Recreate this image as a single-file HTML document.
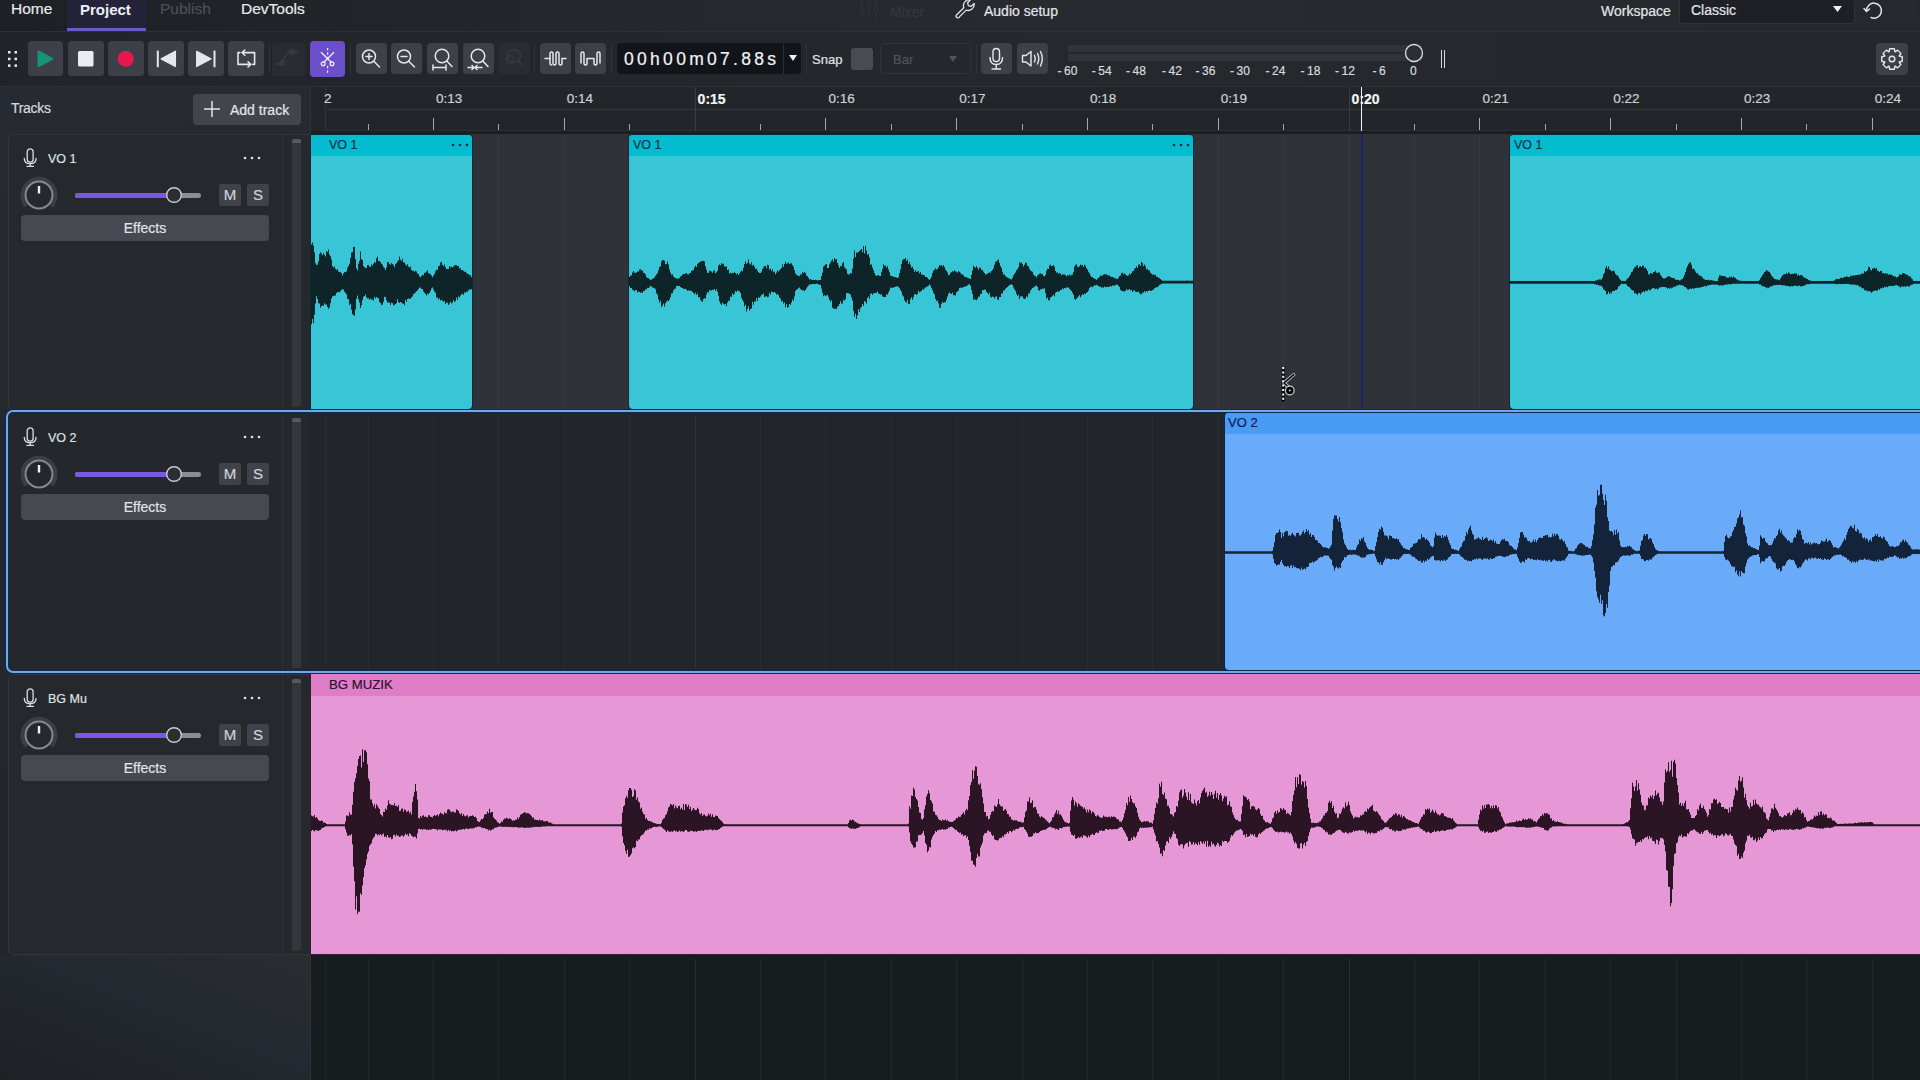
<!DOCTYPE html>
<html><head><meta charset="utf-8">
<style>
*{margin:0;padding:0;box-sizing:border-box}
html,body{width:1920px;height:1080px;overflow:hidden;background:#1f2227;font-family:"Liberation Sans",sans-serif;color:#e6e8eb}
.a{position:absolute}
.t{position:absolute;white-space:nowrap;line-height:1;-webkit-text-stroke:0.2px currentColor}
#top{left:0;top:0;width:1920px;height:31px;background:linear-gradient(90deg,#1d2024 0%,#23262b 25%,#272a2f 55%,#25282d 100%)}
#tb{left:0;top:32px;width:1920px;height:54px;background:linear-gradient(90deg,#212428 0%,#25292d 60%,#24282c 100%)}
.btn{position:absolute;background:#3d4147;border-radius:4px}
.btn svg{position:absolute;left:0;top:0}
.sep{position:absolute;width:1px;background:#30343a}
#ruler{left:311px;top:87px;width:1609px;height:44px;background:#22252a}
#lp{left:0;top:87px;width:310px;height:993px;background:linear-gradient(160deg,#272a30 0%,#24272c 50%,#212428 100%)}
.panel{position:absolute;left:9px;width:293px;border:1px solid #33373d;border-radius:6px;background:#25282d}
.clip{position:absolute;overflow:hidden;border-radius:4px}
</style></head><body>

<!-- TOP BAR -->
<div id="top" class="a">
  <div class="a" style="left:67px;top:0;width:79px;height:31px;background:#242339"></div>
  <div class="a" style="left:67px;top:28px;width:79px;height:3px;background:#6b5bc9"></div>
  <div class="t" style="left:11px;top:0.5px;font-size:15.5px;color:#e8eaed">Home</div>
  <div class="t" style="left:80px;top:1.5px;font-size:15px;font-weight:bold;color:#eef0f3;-webkit-text-stroke:0">Project</div>
  <div class="t" style="left:160px;top:0.5px;font-size:15.5px;color:#4d5157">Publish</div>
  <div class="t" style="left:241px;top:0.5px;font-size:15.5px;color:#e8eaed">DevTools</div>
  <div class="t" style="left:890px;top:5px;font-size:14px;color:#34383e">Mixer</div>
  <div class="t" style="left:984px;top:4px;font-size:14px;color:#e4e6e9">Audio setup</div>
  <div class="t" style="left:1601px;top:4px;font-size:14px;color:#e4e6e9">Workspace</div>
  <div class="a" style="left:1679px;top:-2px;width:176px;height:26px;border:1px solid #30343a;border-radius:3px;background:#1d2024"></div>
  <div class="t" style="left:1691px;top:3px;font-size:14px;color:#e4e6e9">Classic</div>
<svg class="a" style="left:858px;top:0px" width="24" height="20" fill="none" stroke="#2e3237" stroke-width="1.4"><path d="M4 0 V19 M11 0 V19 M18 0 V19"/><circle cx="4" cy="11" r="2" fill="#22262b"/><circle cx="11" cy="5" r="2" fill="#22262b"/><circle cx="18" cy="10" r="2" fill="#22262b"/></svg>
<svg class="a" style="left:953px;top:-2px" width="24" height="22" fill="none" stroke="#e2e5e8" stroke-width="1.3" stroke-linejoin="round"><path d="M3.5 17 L10.8 9.7 A6 6 0 0 1 17.5 1.8 L14.6 4.7 L15.3 7.6 L18.2 8.3 L21.1 5.4 A6 6 0 0 1 13.2 12.1 L5.9 19.4 A1.7 1.7 0 0 1 3.5 17 Z"/></svg>
<svg class="a" style="left:1862px;top:0px" width="24" height="22" fill="none" stroke="#e2e5e8" stroke-width="1.5" stroke-linecap="round" stroke-linejoin="round"><path d="M4.5 11 A7.5 7.5 0 1 1 9 17.5"/><path d="M2 8.5 L4.5 11.5 L7.5 9"/></svg>
<svg class="a" style="left:1832px;top:5px" width="11" height="8"><path d="M1 1 H10 L5.5 7 Z" fill="#eef0f3"/></svg>
<svg class="a" style="left:1900px;top:0px" width="20" height="20" fill="none" stroke="#2a2e33" stroke-width="1.3"><path d="M2 2 V15 M13 2 V15"/></svg>

</div>
<div class="a" style="left:0;top:31px;width:1920px;height:1px;background:#2d3136"></div>

<!-- TOOLBAR -->
<div id="tb" class="a"></div>
<div class="a" style="left:0;top:86px;width:1920px;height:1px;background:#2d3136"></div>
<!-- drag handle -->
<div class="a" style="left:8px;top:51px;width:10px;height:17px">
<svg width="10" height="17"><g fill="#e8eaed"><rect x="0" y="0" width="2.5" height="2.5"/><rect x="6.5" y="0" width="2.5" height="2.5"/><rect x="0" y="6.7" width="2.5" height="2.5"/><rect x="6.5" y="6.7" width="2.5" height="2.5"/><rect x="0" y="13.4" width="2.5" height="2.5"/><rect x="6.5" y="13.4" width="2.5" height="2.5"/></g></svg></div>
<!-- play -->
<div class="btn" style="left:28px;top:41px;width:35px;height:35px"><svg width="35" height="35"><path d="M10.5 10.5 L24.3 17.8 L10.5 25.2 Z" fill="#17937a" stroke="#17937a" stroke-width="2" stroke-linejoin="round"/></svg></div>
<div class="btn" style="left:68px;top:41px;width:36px;height:35px"><svg width="36" height="35"><rect x="10" y="10" width="15.5" height="15.5" rx="1.5" fill="#e9eef4"/></svg></div>
<div class="btn" style="left:108px;top:41px;width:36px;height:35px"><svg width="36" height="35"><circle cx="17.8" cy="17.8" r="8" fill="#e8184e"/></svg></div>
<div class="btn" style="left:148px;top:41px;width:36px;height:35px"><svg width="36" height="35"><rect x="8.8" y="9.6" width="2" height="16.6" fill="#e4e8ee"/><path d="M13.2 17.9 L27.4 10.3 L27.4 25.5 Z" fill="#e4e8ee" stroke="#e4e8ee" stroke-width="1.3" stroke-linejoin="round"/></svg></div>
<div class="btn" style="left:188px;top:41px;width:36px;height:35px"><svg width="36" height="35"><rect x="25.5" y="9.6" width="2" height="16.6" fill="#e4e8ee"/><path d="M8.7 10.3 L22.9 17.9 L8.7 25.5 Z" fill="#e4e8ee" stroke="#e4e8ee" stroke-width="1.3" stroke-linejoin="round"/></svg></div>
<div class="btn" style="left:228px;top:41px;width:36px;height:35px"><svg width="36" height="35" fill="none" stroke="#e4e8ee" stroke-width="1.6" stroke-linecap="round" stroke-linejoin="round"><path d="M11.8 11.6 H10 V23.4 H22.5"/><path d="M20 20.8 L22.6 23.4 L20 26"/><path d="M24.6 23.4 H26.6 V11.6 H14.2"/><path d="M16.8 9 L14.2 11.6 L16.8 14.2"/></svg></div>
<div class="sep" style="left:269px;top:44px;height:30px"></div>
<div class="btn" style="left:272px;top:43px;width:33px;height:33px;background:#292d32"><svg width="33" height="33" fill="none" stroke="#3a3e44" stroke-width="1.3"><path d="M4 21 H9 L15 11 L20 9 H26"/><circle cx="10" cy="20" r="2"/><circle cx="20" cy="9" r="2"/></svg></div>
<div class="btn" style="left:310px;top:41px;width:35px;height:36px;background:#6a4fc9"><svg width="35" height="36" fill="none" stroke="#efe9ff" stroke-width="1.3" stroke-linecap="round"><path d="M17.6 7.5 V8.8 M17.6 12 V13.3 M17.6 16.5 V17.8 M17.6 25.5 V26.8 M17.6 30 V31.3"/><path d="M11.3 11.5 L21.3 21.2 M23.7 11.5 L13.8 21.2"/><circle cx="13.2" cy="22.8" r="1.9"/><circle cx="22" cy="22.8" r="1.9"/></svg></div>
<div class="sep" style="left:350px;top:44px;height:30px"></div>
<!-- zoom buttons -->
<div class="btn" style="left:356px;top:43px;width:31px;height:31px"><svg width="31" height="31" fill="none" stroke="#e4e8ee" stroke-width="1.5" stroke-linecap="round"><circle cx="13" cy="13.5" r="6.5"/><path d="M17.8 18.3 L23.5 24"/><path d="M13 10.5 V16.5 M10 13.5 H16"/></svg></div>
<div class="btn" style="left:391px;top:43px;width:31px;height:31px"><svg width="31" height="31" fill="none" stroke="#e4e8ee" stroke-width="1.5" stroke-linecap="round"><circle cx="13" cy="13.5" r="6.5"/><path d="M17.8 18.3 L23.5 24"/><path d="M10 13.5 H16"/></svg></div>
<div class="btn" style="left:427px;top:43px;width:31px;height:31px"><svg width="31" height="31" fill="none" stroke="#e4e8ee" stroke-width="1.5" stroke-linecap="round"><circle cx="15" cy="13" r="6.8"/><path d="M19.8 18 L25 23.5"/><path d="M6 24.5 H19 M6 22 V27 M19 22 V27"/></svg></div>
<div class="btn" style="left:463px;top:43px;width:31px;height:31px"><svg width="31" height="31" fill="none" stroke="#e4e8ee" stroke-width="1.5" stroke-linecap="round"><circle cx="15" cy="13" r="6.8"/><path d="M19.8 18 L25 23.5"/><path d="M5 24.5 H19 M9 22.5 L11 24.5 L9 26.5 M14 22.5 L12 24.5 L14 26.5"/></svg></div>
<div class="btn" style="left:499px;top:43px;width:31px;height:31px;background:#292d32"><svg width="31" height="31" fill="none" stroke="#353940" stroke-width="1.5"><circle cx="15" cy="13" r="6.5"/><path d="M19.5 18 L24 23"/><circle cx="11" cy="17" r="4"/></svg></div>
<div class="sep" style="left:534px;top:44px;height:30px"></div>
<div class="btn" style="left:540px;top:43px;width:31px;height:31px"><svg width="31" height="31" fill="none" stroke="#e4e8ee" stroke-width="1.5" stroke-linecap="round" stroke-linejoin="round"><path d="M5 15.5 H10 V11 Q10 9 11.5 9 Q13 9 13 11 V20 Q13 22 14.5 22 Q16 22 16 20 V11 Q16 9 17.5 9 Q19 9 19 11 V20 Q19 22 20.5 22 Q22 22 22 20 V15.5 H26"/><path d="M10 15.5 V20 Q10 22 11.5 22"/></svg></div>
<div class="btn" style="left:575px;top:43px;width:31px;height:31px"><svg width="31" height="31" fill="none" stroke="#e4e8ee" stroke-width="1.5" stroke-linecap="round" stroke-linejoin="round"><path d="M6 20 V11 Q6 9 7.5 9 Q9 9 9 11 V20 Q9 22 10.5 22 Q12 22 12 20 V15.5 H19 V20 Q19 22 20.5 22 Q22 22 22 20 V11 Q22 9 23.5 9 Q25 9 25 11 V20"/></svg></div>
<div class="sep" style="left:611px;top:44px;height:30px"></div>
<!-- time display -->
<div class="a" style="left:617px;top:43px;width:184px;height:31px;background:#111418;border-radius:4px"></div>
<div class="a" style="left:783px;top:43px;width:1px;height:31px;background:#2a2e33"></div>
<div class="t" style="left:624px;top:51px;font-size:17.5px;letter-spacing:3.3px;color:#f2f4f6">00h00m07.88s</div>
<svg class="a" style="left:788px;top:54px" width="10" height="8"><path d="M1 1 H9 L5 7 Z" fill="#eef0f3"/></svg>
<div class="sep" style="left:806px;top:44px;height:30px"></div>
<div class="t" style="left:812px;top:53px;font-size:13px;color:#e0e2e5">Snap</div>
<div class="a" style="left:851px;top:48px;width:22px;height:22px;background:#474b52;border-radius:3px"></div>
<div class="a" style="left:880px;top:43px;width:91px;height:31px;border:1px solid #30343a;border-radius:4px"></div>
<div class="t" style="left:893px;top:53px;font-size:13px;color:#50555b">Bar</div>
<svg class="a" style="left:948px;top:55px" width="10" height="8"><path d="M1 1 H9 L5 7 Z" fill="#50555b"/></svg>
<div class="sep" style="left:976px;top:44px;height:30px"></div>
<div class="btn" style="left:981px;top:43px;width:31px;height:31px"><svg width="31" height="31" fill="none" stroke="#e4e8ee" stroke-width="1.4" stroke-linecap="round"><rect x="12" y="5.5" width="6.5" height="13" rx="3.25"/><path d="M9 14.5 Q9 21.5 15.25 21.5 Q21.5 21.5 21.5 14.5"/><path d="M15.25 21.5 V26 M11 26 H19.5"/></svg></div>
<div class="btn" style="left:1017px;top:43px;width:31px;height:31px"><svg width="31" height="31" fill="none" stroke="#e4e8ee" stroke-width="1.4" stroke-linecap="round" stroke-linejoin="round"><path d="M5.5 12.5 H9 L14 8.5 V23 L9 19 H5.5 Z"/><path d="M17.5 12.5 Q19 15.5 17.5 19"/><path d="M20.5 10.5 Q23 15.5 20.5 21"/><path d="M23.5 8.5 Q27 15.5 23.5 23"/></svg></div>
<!-- meter -->
<div class="a" style="left:1068px;top:45px;width:354px;height:7px;background:#30343a;border-radius:1px"></div>
<div class="a" style="left:1068px;top:54px;width:354px;height:7px;background:#30343a;border-radius:1px"></div>
<svg class="a" style="left:1402px;top:42px" width="24" height="24"><circle cx="12" cy="11" r="8.5" fill="#2a2e33" stroke="#dcdfe3" stroke-width="1.3"/></svg>
<div class="a" style="left:1441px;top:50px;width:1px;height:18px;background:#d6d9dd"></div>
<div class="a" style="left:1444px;top:50px;width:1px;height:18px;background:#d6d9dd"></div>
<div class="t" style="left:1057.5px;top:64.5px;font-size:12px;color:#d8dbdf"><span style="margin-right:2.5px">-</span>60</div><div class="t" style="left:1091.8px;top:64.5px;font-size:12px;color:#d8dbdf"><span style="margin-right:2.5px">-</span>54</div><div class="t" style="left:1126.0px;top:64.5px;font-size:12px;color:#d8dbdf"><span style="margin-right:2.5px">-</span>48</div><div class="t" style="left:1162.0px;top:64.5px;font-size:12px;color:#d8dbdf"><span style="margin-right:2.5px">-</span>42</div><div class="t" style="left:1195.5px;top:64.5px;font-size:12px;color:#d8dbdf"><span style="margin-right:2.5px">-</span>36</div><div class="t" style="left:1230.0px;top:64.5px;font-size:12px;color:#d8dbdf"><span style="margin-right:2.5px">-</span>30</div><div class="t" style="left:1265.5px;top:64.5px;font-size:12px;color:#d8dbdf"><span style="margin-right:2.5px">-</span>24</div><div class="t" style="left:1300.5px;top:64.5px;font-size:12px;color:#d8dbdf"><span style="margin-right:2.5px">-</span>18</div><div class="t" style="left:1335.0px;top:64.5px;font-size:12px;color:#d8dbdf"><span style="margin-right:2.5px">-</span>12</div><div class="t" style="left:1372.5px;top:64.5px;font-size:12px;color:#d8dbdf"><span style="margin-right:2.5px">-</span>6</div><div class="t" style="left:1410.0px;top:64.5px;font-size:12px;color:#d8dbdf">0</div>
<!-- gear -->
<div class="btn" style="left:1876px;top:43px;width:32px;height:32px"><svg width="32" height="32" fill="none" stroke="#e4e8ee" stroke-width="1.4" stroke-linejoin="round"><path d="M23.21 13.03 L26.25 13.71 L26.25 18.29 L23.21 18.97 L23.20 19.00 L24.87 21.63 L21.63 24.87 L19.00 23.20 L18.97 23.21 L18.29 26.25 L13.71 26.25 L13.03 23.21 L13.00 23.20 L10.37 24.87 L7.13 21.63 L8.80 19.00 L8.79 18.97 L5.75 18.29 L5.75 13.71 L8.79 13.03 L8.80 13.00 L7.13 10.37 L10.37 7.13 L13.00 8.80 L13.03 8.79 L13.71 5.75 L18.29 5.75 L18.97 8.79 L19.00 8.80 L21.63 7.13 L24.87 10.37 L23.20 13.00 Z"/><circle cx="16" cy="16" r="2.8"/></svg></div>


<!-- LEFT PANEL -->
<div id="lp" class="a"></div><div class="a" style="left:0;top:955px;width:310px;height:125px;background:linear-gradient(to bottom left,#2a2d30 0%,#232930 45%,#1e2124 100%)"></div>
<div class="t" style="left:11px;top:101px;font-size:14px;letter-spacing:-0.3px;color:#d8dadd">Tracks</div>
<div class="btn" style="left:193px;top:94px;width:108px;height:31px;background:#42464c"></div><div class="a" style="left:310px;top:87px;width:1px;height:993px;background:#2f3338"></div>
<div class="t" style="left:230px;top:103px;font-size:14px;color:#e4e6e9">Add track</div><svg class="a" style="left:203px;top:100px" width="18" height="18" fill="none" stroke="#e2e5e8" stroke-width="1.5"><path d="M9 1 V17 M1 9 H17"/></svg>

<div class="a" style="left:8px;top:134px;width:304px;height:277px;border:1px solid #32363c;border-right:none;border-radius:6px 0 0 6px;background:#25292e"></div>
<div class="a" style="left:8px;top:674px;width:304px;height:281px;border:1px solid #32363c;border-right:none;border-radius:6px 0 0 6px;background:#25292e"></div>
<div class="a" style="left:8px;top:413px;width:304px;height:259px;background:#24272c"></div>
<svg class="a" style="left:22px;top:148px" width="16" height="20" fill="none" stroke="#d9dce0" stroke-width="1.3" stroke-linecap="round"><rect x="5.2" y="0.9" width="5.9" height="13.3" rx="2.95"/><path d="M2.3 10.5 Q2.3 15.7 8.15 15.7 Q14 15.7 14 10.5"/><path d="M8.15 15.7 V18.3 M4.9 18.3 H11.5"/></svg>
<div class="t" style="left:48px;top:153px;font-size:12.5px;color:#dfe2e5">VO 1</div>
<svg class="a" style="left:242px;top:155px" width="20" height="6"><g fill="#e0e3e6"><circle cx="3" cy="3" r="1.3"/><circle cx="10" cy="3" r="1.3"/><circle cx="17" cy="3" r="1.3"/></g></svg>
<svg class="a" style="left:19px;top:175px" width="40" height="40" fill="none"><path d="M7.6 31.2 A16.5 16.5 0 1 1 32.4 31.2" stroke="#3b3f45" stroke-width="4"/><circle cx="20" cy="20" r="13.5" stroke="#868a90" stroke-width="2"/><path d="M20 11 V18.5" stroke="#f2f3f5" stroke-width="2.4"/></svg>
<div class="a" style="left:75px;top:193px;width:126px;height:4.5px;border-radius:2.5px;background:#8a8d92"></div>
<div class="a" style="left:75px;top:193px;width:100px;height:4.5px;border-radius:2.5px;background:#7b58e0"></div>
<svg class="a" style="left:164px;top:185px" width="20" height="20"><circle cx="10" cy="10" r="7.3" fill="#2b2e33" stroke="#c9ccd0" stroke-width="1.4"/></svg>
<div class="a" style="left:219px;top:184px;width:22px;height:22px;background:#3f4349;border-radius:2px"></div>
<div class="a" style="left:247px;top:184px;width:22px;height:22px;background:#3f4349;border-radius:2px"></div>
<div class="t" style="left:219px;top:187px;width:22px;text-align:center;font-size:15px;color:#d0d3d7">M</div>
<div class="t" style="left:247px;top:187px;width:22px;text-align:center;font-size:15px;color:#d0d3d7">S</div>
<div class="a" style="left:21px;top:215px;width:248px;height:26px;background:#464a50;border-radius:4px"></div>
<div class="t" style="left:21px;top:221px;width:248px;text-align:center;font-size:14px;color:#e2e4e7">Effects</div>
<div class="a" style="left:282px;top:135px;width:1px;height:274px;background:#2e3237"></div>
<div class="a" style="left:292px;top:139px;width:9px;height:268px;background:#33373c;border-radius:2px"></div>
<div class="a" style="left:292px;top:139px;width:9px;height:4px;background:#55595f;border-radius:2px 2px 0 0"></div>
<svg class="a" style="left:22px;top:427px" width="16" height="20" fill="none" stroke="#d9dce0" stroke-width="1.3" stroke-linecap="round"><rect x="5.2" y="0.9" width="5.9" height="13.3" rx="2.95"/><path d="M2.3 10.5 Q2.3 15.7 8.15 15.7 Q14 15.7 14 10.5"/><path d="M8.15 15.7 V18.3 M4.9 18.3 H11.5"/></svg>
<div class="t" style="left:48px;top:432px;font-size:12.5px;color:#dfe2e5">VO 2</div>
<svg class="a" style="left:242px;top:434px" width="20" height="6"><g fill="#e0e3e6"><circle cx="3" cy="3" r="1.3"/><circle cx="10" cy="3" r="1.3"/><circle cx="17" cy="3" r="1.3"/></g></svg>
<svg class="a" style="left:19px;top:454px" width="40" height="40" fill="none"><path d="M7.6 31.2 A16.5 16.5 0 1 1 32.4 31.2" stroke="#3b3f45" stroke-width="4"/><circle cx="20" cy="20" r="13.5" stroke="#868a90" stroke-width="2"/><path d="M20 11 V18.5" stroke="#f2f3f5" stroke-width="2.4"/></svg>
<div class="a" style="left:75px;top:472px;width:126px;height:4.5px;border-radius:2.5px;background:#8a8d92"></div>
<div class="a" style="left:75px;top:472px;width:100px;height:4.5px;border-radius:2.5px;background:#7b58e0"></div>
<svg class="a" style="left:164px;top:464px" width="20" height="20"><circle cx="10" cy="10" r="7.3" fill="#2b2e33" stroke="#c9ccd0" stroke-width="1.4"/></svg>
<div class="a" style="left:219px;top:463px;width:22px;height:22px;background:#3f4349;border-radius:2px"></div>
<div class="a" style="left:247px;top:463px;width:22px;height:22px;background:#3f4349;border-radius:2px"></div>
<div class="t" style="left:219px;top:466px;width:22px;text-align:center;font-size:15px;color:#d0d3d7">M</div>
<div class="t" style="left:247px;top:466px;width:22px;text-align:center;font-size:15px;color:#d0d3d7">S</div>
<div class="a" style="left:21px;top:494px;width:248px;height:26px;background:#464a50;border-radius:4px"></div>
<div class="t" style="left:21px;top:500px;width:248px;text-align:center;font-size:14px;color:#e2e4e7">Effects</div>
<div class="a" style="left:282px;top:414px;width:1px;height:256px;background:#2e3237"></div>
<div class="a" style="left:292px;top:418px;width:9px;height:250px;background:#33373c;border-radius:2px"></div>
<div class="a" style="left:292px;top:418px;width:9px;height:4px;background:#55595f;border-radius:2px 2px 0 0"></div>
<svg class="a" style="left:22px;top:688px" width="16" height="20" fill="none" stroke="#d9dce0" stroke-width="1.3" stroke-linecap="round"><rect x="5.2" y="0.9" width="5.9" height="13.3" rx="2.95"/><path d="M2.3 10.5 Q2.3 15.7 8.15 15.7 Q14 15.7 14 10.5"/><path d="M8.15 15.7 V18.3 M4.9 18.3 H11.5"/></svg>
<div class="t" style="left:48px;top:693px;font-size:12.5px;color:#dfe2e5">BG Mu</div>
<svg class="a" style="left:242px;top:695px" width="20" height="6"><g fill="#e0e3e6"><circle cx="3" cy="3" r="1.3"/><circle cx="10" cy="3" r="1.3"/><circle cx="17" cy="3" r="1.3"/></g></svg>
<svg class="a" style="left:19px;top:715px" width="40" height="40" fill="none"><path d="M7.6 31.2 A16.5 16.5 0 1 1 32.4 31.2" stroke="#3b3f45" stroke-width="4"/><circle cx="20" cy="20" r="13.5" stroke="#868a90" stroke-width="2"/><path d="M20 11 V18.5" stroke="#f2f3f5" stroke-width="2.4"/></svg>
<div class="a" style="left:75px;top:733px;width:126px;height:4.5px;border-radius:2.5px;background:#8a8d92"></div>
<div class="a" style="left:75px;top:733px;width:100px;height:4.5px;border-radius:2.5px;background:#7b58e0"></div>
<svg class="a" style="left:164px;top:725px" width="20" height="20"><circle cx="10" cy="10" r="7.3" fill="#2b2e33" stroke="#c9ccd0" stroke-width="1.4"/></svg>
<div class="a" style="left:219px;top:724px;width:22px;height:22px;background:#3f4349;border-radius:2px"></div>
<div class="a" style="left:247px;top:724px;width:22px;height:22px;background:#3f4349;border-radius:2px"></div>
<div class="t" style="left:219px;top:727px;width:22px;text-align:center;font-size:15px;color:#d0d3d7">M</div>
<div class="t" style="left:247px;top:727px;width:22px;text-align:center;font-size:15px;color:#d0d3d7">S</div>
<div class="a" style="left:21px;top:755px;width:248px;height:26px;background:#464a50;border-radius:4px"></div>
<div class="t" style="left:21px;top:761px;width:248px;text-align:center;font-size:14px;color:#e2e4e7">Effects</div>
<div class="a" style="left:282px;top:675px;width:1px;height:278px;background:#2e3237"></div>
<div class="a" style="left:292px;top:679px;width:9px;height:272px;background:#33373c;border-radius:2px"></div>
<div class="a" style="left:292px;top:679px;width:9px;height:4px;background:#55595f;border-radius:2px 2px 0 0"></div>
<!-- RULER -->
<div class="a" style="left:311px;top:87px;width:1609px;height:44px;overflow:hidden;background:#22252a">
<div class="a" style="left:14px;top:0;width:1px;height:44px;background:#30343a"></div>
<div class="a" style="left:16px;top:22px;width:1593px;height:1px;background:#34383e"></div>
<div class="a" style="left:0;top:43px;width:1609px;height:1px;background:#2c3035"></div>
<div class="a" style="left:-8.8px;top:31px;width:1px;height:12px;background:#a4a7ab"></div>
<div class="t" style="left:-5.8px;top:5px;font-size:13.5px;color:#cfd2d6">0:12</div>
<div class="a" style="left:56.6px;top:37px;width:1px;height:6px;background:#a4a7ab"></div>
<div class="a" style="left:122.0px;top:31px;width:1px;height:12px;background:#a4a7ab"></div>
<div class="t" style="left:125.0px;top:5px;font-size:13.5px;color:#cfd2d6">0:13</div>
<div class="a" style="left:187.4px;top:37px;width:1px;height:6px;background:#a4a7ab"></div>
<div class="a" style="left:252.8px;top:31px;width:1px;height:12px;background:#a4a7ab"></div>
<div class="t" style="left:255.8px;top:5px;font-size:13.5px;color:#cfd2d6">0:14</div>
<div class="a" style="left:318.2px;top:37px;width:1px;height:6px;background:#a4a7ab"></div>
<div class="a" style="left:383.6px;top:0;width:1px;height:44px;background:#3a3e44"></div>
<div class="t" style="left:386.6px;top:5px;font-size:14px;font-weight:bold;color:#f4f5f7">0:15</div>
<div class="a" style="left:449.0px;top:37px;width:1px;height:6px;background:#a4a7ab"></div>
<div class="a" style="left:514.4px;top:31px;width:1px;height:12px;background:#a4a7ab"></div>
<div class="t" style="left:517.4px;top:5px;font-size:13.5px;color:#cfd2d6">0:16</div>
<div class="a" style="left:579.8px;top:37px;width:1px;height:6px;background:#a4a7ab"></div>
<div class="a" style="left:645.2px;top:31px;width:1px;height:12px;background:#a4a7ab"></div>
<div class="t" style="left:648.2px;top:5px;font-size:13.5px;color:#cfd2d6">0:17</div>
<div class="a" style="left:710.6px;top:37px;width:1px;height:6px;background:#a4a7ab"></div>
<div class="a" style="left:776.0px;top:31px;width:1px;height:12px;background:#a4a7ab"></div>
<div class="t" style="left:779.0px;top:5px;font-size:13.5px;color:#cfd2d6">0:18</div>
<div class="a" style="left:841.4px;top:37px;width:1px;height:6px;background:#a4a7ab"></div>
<div class="a" style="left:906.8px;top:31px;width:1px;height:12px;background:#a4a7ab"></div>
<div class="t" style="left:909.8px;top:5px;font-size:13.5px;color:#cfd2d6">0:19</div>
<div class="a" style="left:972.2px;top:37px;width:1px;height:6px;background:#a4a7ab"></div>
<div class="a" style="left:1037.6px;top:0;width:1px;height:44px;background:#3a3e44"></div>
<div class="t" style="left:1040.6px;top:5px;font-size:14px;font-weight:bold;color:#f4f5f7">0:20</div>
<div class="a" style="left:1103.0px;top:37px;width:1px;height:6px;background:#a4a7ab"></div>
<div class="a" style="left:1168.4px;top:31px;width:1px;height:12px;background:#a4a7ab"></div>
<div class="t" style="left:1171.4px;top:5px;font-size:13.5px;color:#cfd2d6">0:21</div>
<div class="a" style="left:1233.8px;top:37px;width:1px;height:6px;background:#a4a7ab"></div>
<div class="a" style="left:1299.2px;top:31px;width:1px;height:12px;background:#a4a7ab"></div>
<div class="t" style="left:1302.2px;top:5px;font-size:13.5px;color:#cfd2d6">0:22</div>
<div class="a" style="left:1364.6px;top:37px;width:1px;height:6px;background:#a4a7ab"></div>
<div class="a" style="left:1430.0px;top:31px;width:1px;height:12px;background:#a4a7ab"></div>
<div class="t" style="left:1433.0px;top:5px;font-size:13.5px;color:#cfd2d6">0:23</div>
<div class="a" style="left:1495.4px;top:37px;width:1px;height:6px;background:#a4a7ab"></div>
<div class="a" style="left:1560.8px;top:31px;width:1px;height:12px;background:#a4a7ab"></div>
<div class="t" style="left:1563.8px;top:5px;font-size:13.5px;color:#cfd2d6">0:24</div>
</div>
<div class="a" style="left:311px;top:131px;width:1609px;height:3px;background:#1b1e22"></div>

<!-- TIMELINE -->
<div class="a" style="left:311px;top:134px;width:1609px;height:277px;background:#2f3339"></div>
<div class="a" style="left:311px;top:413px;width:1609px;height:258px;background:#222529"></div>
<div class="a" style="left:311px;top:954px;width:1609px;height:126px;background:#171c1f"></div>
<div class="a" style="left:325px;top:136px;width:1px;height:273px;background:#363a40"></div>
<div class="a" style="left:367.6px;top:136px;width:1px;height:273px;background:#363a40"></div>
<div class="a" style="left:433.0px;top:136px;width:1px;height:273px;background:#363a40"></div>
<div class="a" style="left:498.4px;top:136px;width:1px;height:273px;background:#363a40"></div>
<div class="a" style="left:563.8px;top:136px;width:1px;height:273px;background:#363a40"></div>
<div class="a" style="left:629.2px;top:136px;width:1px;height:273px;background:#363a40"></div>
<div class="a" style="left:694.6px;top:136px;width:1px;height:273px;background:#3a3e44"></div>
<div class="a" style="left:760.0px;top:136px;width:1px;height:273px;background:#363a40"></div>
<div class="a" style="left:825.4px;top:136px;width:1px;height:273px;background:#363a40"></div>
<div class="a" style="left:890.8px;top:136px;width:1px;height:273px;background:#363a40"></div>
<div class="a" style="left:956.2px;top:136px;width:1px;height:273px;background:#363a40"></div>
<div class="a" style="left:1021.6px;top:136px;width:1px;height:273px;background:#363a40"></div>
<div class="a" style="left:1087.0px;top:136px;width:1px;height:273px;background:#363a40"></div>
<div class="a" style="left:1152.4px;top:136px;width:1px;height:273px;background:#363a40"></div>
<div class="a" style="left:1217.8px;top:136px;width:1px;height:273px;background:#363a40"></div>
<div class="a" style="left:1283.2px;top:136px;width:1px;height:273px;background:#363a40"></div>
<div class="a" style="left:1348.6px;top:136px;width:1px;height:273px;background:#3a3e44"></div>
<div class="a" style="left:1414.0px;top:136px;width:1px;height:273px;background:#363a40"></div>
<div class="a" style="left:1479.4px;top:136px;width:1px;height:273px;background:#363a40"></div>
<div class="a" style="left:1544.8px;top:136px;width:1px;height:273px;background:#363a40"></div>
<div class="a" style="left:1610.2px;top:136px;width:1px;height:273px;background:#363a40"></div>
<div class="a" style="left:1675.6px;top:136px;width:1px;height:273px;background:#363a40"></div>
<div class="a" style="left:1741.0px;top:136px;width:1px;height:273px;background:#363a40"></div>
<div class="a" style="left:1806.4px;top:136px;width:1px;height:273px;background:#363a40"></div>
<div class="a" style="left:1871.8px;top:136px;width:1px;height:273px;background:#363a40"></div>
<div class="a" style="left:325px;top:416px;width:1px;height:253px;background:#2a2d32"></div>
<div class="a" style="left:367.6px;top:416px;width:1px;height:253px;background:#2a2d32"></div>
<div class="a" style="left:433.0px;top:416px;width:1px;height:253px;background:#2a2d32"></div>
<div class="a" style="left:498.4px;top:416px;width:1px;height:253px;background:#2a2d32"></div>
<div class="a" style="left:563.8px;top:416px;width:1px;height:253px;background:#2a2d32"></div>
<div class="a" style="left:629.2px;top:416px;width:1px;height:253px;background:#2a2d32"></div>
<div class="a" style="left:694.6px;top:416px;width:1px;height:253px;background:#30343a"></div>
<div class="a" style="left:760.0px;top:416px;width:1px;height:253px;background:#2a2d32"></div>
<div class="a" style="left:825.4px;top:416px;width:1px;height:253px;background:#2a2d32"></div>
<div class="a" style="left:890.8px;top:416px;width:1px;height:253px;background:#2a2d32"></div>
<div class="a" style="left:956.2px;top:416px;width:1px;height:253px;background:#2a2d32"></div>
<div class="a" style="left:1021.6px;top:416px;width:1px;height:253px;background:#2a2d32"></div>
<div class="a" style="left:1087.0px;top:416px;width:1px;height:253px;background:#2a2d32"></div>
<div class="a" style="left:1152.4px;top:416px;width:1px;height:253px;background:#2a2d32"></div>
<div class="a" style="left:1217.8px;top:416px;width:1px;height:253px;background:#2a2d32"></div>
<div class="a" style="left:1283.2px;top:416px;width:1px;height:253px;background:#2a2d32"></div>
<div class="a" style="left:1348.6px;top:416px;width:1px;height:253px;background:#30343a"></div>
<div class="a" style="left:1414.0px;top:416px;width:1px;height:253px;background:#2a2d32"></div>
<div class="a" style="left:1479.4px;top:416px;width:1px;height:253px;background:#2a2d32"></div>
<div class="a" style="left:1544.8px;top:416px;width:1px;height:253px;background:#2a2d32"></div>
<div class="a" style="left:1610.2px;top:416px;width:1px;height:253px;background:#2a2d32"></div>
<div class="a" style="left:1675.6px;top:416px;width:1px;height:253px;background:#2a2d32"></div>
<div class="a" style="left:1741.0px;top:416px;width:1px;height:253px;background:#2a2d32"></div>
<div class="a" style="left:1806.4px;top:416px;width:1px;height:253px;background:#2a2d32"></div>
<div class="a" style="left:1871.8px;top:416px;width:1px;height:253px;background:#2a2d32"></div>
<div class="a" style="left:325px;top:959px;width:1px;height:121px;background:#22272a"></div>
<div class="a" style="left:367.6px;top:959px;width:1px;height:121px;background:#22272a"></div>
<div class="a" style="left:433.0px;top:959px;width:1px;height:121px;background:#22272a"></div>
<div class="a" style="left:498.4px;top:959px;width:1px;height:121px;background:#22272a"></div>
<div class="a" style="left:563.8px;top:959px;width:1px;height:121px;background:#22272a"></div>
<div class="a" style="left:629.2px;top:959px;width:1px;height:121px;background:#22272a"></div>
<div class="a" style="left:694.6px;top:959px;width:1px;height:121px;background:#2a2f33"></div>
<div class="a" style="left:760.0px;top:959px;width:1px;height:121px;background:#22272a"></div>
<div class="a" style="left:825.4px;top:959px;width:1px;height:121px;background:#22272a"></div>
<div class="a" style="left:890.8px;top:959px;width:1px;height:121px;background:#22272a"></div>
<div class="a" style="left:956.2px;top:959px;width:1px;height:121px;background:#22272a"></div>
<div class="a" style="left:1021.6px;top:959px;width:1px;height:121px;background:#22272a"></div>
<div class="a" style="left:1087.0px;top:959px;width:1px;height:121px;background:#22272a"></div>
<div class="a" style="left:1152.4px;top:959px;width:1px;height:121px;background:#22272a"></div>
<div class="a" style="left:1217.8px;top:959px;width:1px;height:121px;background:#22272a"></div>
<div class="a" style="left:1283.2px;top:959px;width:1px;height:121px;background:#22272a"></div>
<div class="a" style="left:1348.6px;top:959px;width:1px;height:121px;background:#2a2f33"></div>
<div class="a" style="left:1414.0px;top:959px;width:1px;height:121px;background:#22272a"></div>
<div class="a" style="left:1479.4px;top:959px;width:1px;height:121px;background:#22272a"></div>
<div class="a" style="left:1544.8px;top:959px;width:1px;height:121px;background:#22272a"></div>
<div class="a" style="left:1610.2px;top:959px;width:1px;height:121px;background:#22272a"></div>
<div class="a" style="left:1675.6px;top:959px;width:1px;height:121px;background:#22272a"></div>
<div class="a" style="left:1741.0px;top:959px;width:1px;height:121px;background:#22272a"></div>
<div class="a" style="left:1806.4px;top:959px;width:1px;height:121px;background:#22272a"></div>
<div class="a" style="left:1871.8px;top:959px;width:1px;height:121px;background:#22272a"></div>
<div class="a" style="left:311px;top:87px;width:13px;height:44px;background:#22252a"></div>
<!-- CLIPS -->
<div class="clip" style="border-radius:0 4px 4px 0;left:311px;top:135px;width:161px;height:274px;background:#38c6d6;box-shadow:0 0 0 1px #0b2a33">
<div class="a" style="left:0;top:0;width:100%;height:21px;background:#03bccf"></div>
<div class="t" style="left:18px;top:4px;font-size:12.5px;color:#0b3347">VO 1</div>
<svg class="a" style="left:139px;top:7px" width="20" height="6"><g fill="#0e2e48"><circle cx="3" cy="3" r="1.3"/><circle cx="10" cy="3" r="1.3"/><circle cx="17" cy="3" r="1.3"/></g></svg>
<svg class="a" style="left:0;top:0" width="1620" height="290"><path fill="#0d2429" d="M0 109.6V109.6H1V107.4H2V110.5H3V117.4H4V128.3H5V130.0H6V129.5H7V126.2H8V119.0H9V117.2H10V118.6H11V120.2H12V118.0H13V120.1H14V121.5H15V116.0H16V117.0H17V114.6H18V119.8H19V121.3H20V124.6H21V131.0H22V132.6H23V131.4H24V133.7H25V135.1H26V134.1H27V136.6H28V137.1H29V137.3H30V138.1H31V140.5H32V138.5H33V137.3H34V136.9H35V136.3H36V132.8H37V131.0H38V128.7H39V123.0H40V117.5H41V117.3H42V111.9H43V111.8H44V124.2H45V133.2H46V135.2H47V128.7H48V125.7H49V116.6H50V123.9H51V125.0H52V130.9H53V132.3H54V133.0H55V132.8H56V130.0H57V130.0H58V131.5H59V132.0H60V129.4H61V130.4H62V128.8H63V127.0H64V127.8H65V123.3H66V121.4H67V126.0H68V125.9H69V126.9H70V128.8H71V129.7H72V132.1H73V132.9H74V135.0H75V132.3H76V127.2H77V127.1H78V129.0H79V129.8H80V127.9H81V129.1H82V130.2H83V132.3H84V129.1H85V128.1H86V126.5H87V125.2H88V121.5H89V124.7H90V126.1H91V123.7H92V127.4H93V127.5H94V129.4H95V130.5H96V129.2H97V131.5H98V132.6H99V131.6H100V135.0H101V135.7H102V135.8H103V136.8H104V135.7H105V136.6H106V138.7H107V139.1H108V141.5H109V142.0H110V141.1H111V139.8H112V140.2H113V137.7H114V137.7H115V136.6H116V135.4H117V138.3H118V138.4H119V139.2H120V140.6H121V142.3H122V140.6H123V139.1H124V136.3H125V134.8H126V134.7H127V131.3H128V130.7H129V127.6H130V126.9H131V129.7H132V130.9H133V129.5H134V132.3H135V133.9H136V134.0H137V134.0H138V130.9H139V132.2H140V131.8H141V132.3H142V131.4H143V130.6H144V129.9H145V130.3H146V130.9H147V131.1H148V133.6H149V133.2H150V135.2H151V135.0H152V135.8H153V136.7H154V136.8H155V137.8H156V139.1H157V139.0H158V140.2H159V140.3H160V142.2H161V153.9H160V154.8H159V154.2H158V155.3H157V156.7H156V156.6H155V158.1H154V157.2H153V159.9H152V158.8H151V159.4H150V160.5H149V162.5H148V161.4H147V164.9H146V162.6H145V166.3H144V167.1H143V165.0H142V167.5H141V168.6H140V166.7H139V168.4H138V170.0H137V167.7H136V167.8H135V168.9H134V166.0H133V166.8H132V165.6H131V165.0H130V165.5H129V163.3H128V164.4H127V162.6H126V162.4H125V157.7H124V156.6H123V154.6H122V152.5H121V153.6H120V156.0H119V158.0H118V159.3H117V158.8H116V160.5H115V159.0H114V157.7H113V156.4H112V154.1H111V153.9H110V152.4H109V152.8H108V154.1H107V155.5H106V156.2H105V157.6H104V158.4H103V158.9H102V161.5H101V162.2H100V163.7H99V163.8H98V163.5H97V163.9H96V167.1H95V164.8H94V170.2H93V168.7H92V168.6H91V167.4H90V167.1H89V168.0H88V167.0H87V164.2H86V168.2H85V168.9H84V170.1H83V170.4H82V168.3H81V167.8H80V169.9H79V167.4H78V167.4H77V167.4H76V165.2H75V161.9H74V161.8H73V166.7H72V169.6H71V170.2H70V168.1H69V167.0H68V163.3H67V162.8H66V162.0H65V163.5H64V161.7H63V165.4H62V164.5H61V164.8H60V163.6H59V164.8H58V163.3H57V163.5H56V162.2H55V159.6H54V160.9H53V161.8H52V165.2H51V170.3H50V172.9H49V167.6H48V164.2H47V160.4H46V163.7H45V174.2H44V181.0H43V179.9H42V179.3H41V174.8H40V168.7H39V170.1H38V164.3H37V163.7H36V159.3H35V157.9H34V156.8H33V154.7H32V153.9H31V154.9H30V156.2H29V157.2H28V157.0H27V157.2H26V157.9H25V160.2H24V161.0H23V160.7H22V161.4H21V163.5H20V168.2H19V172.4H18V173.7H17V171.9H16V169.6H15V169.6H14V168.2H13V170.7H12V170.6H11V170.9H10V172.8H9V168.5H8V168.3H7V163.9H6V161.3H5V168.6H4V179.8H3V188.2H2V183.9H1V189.2H0Z"/></svg>
</div>
<div class="clip" style="left:629px;top:135px;width:564px;height:274px;background:#38c6d6;box-shadow:0 0 0 1px #0b2a33">
<div class="a" style="left:0;top:0;width:100%;height:21px;background:#03bccf"></div>
<div class="t" style="left:4px;top:4px;font-size:12.5px;color:#0b3347">VO 1</div>
<svg class="a" style="left:542px;top:7px" width="20" height="6"><g fill="#0e2e48"><circle cx="3" cy="3" r="1.3"/><circle cx="10" cy="3" r="1.3"/><circle cx="17" cy="3" r="1.3"/></g></svg>
<svg class="a" style="left:0;top:0" width="1620" height="290"><path fill="#0d2429" d="M0 142.1V142.1H1V140.5H2V140.5H3V137.6H4V136.1H5V137.7H6V137.7H7V137.5H8V136.4H9V136.4H10V134.4H11V134.2H12V135.5H13V135.4H14V137.7H15V138.1H16V139.4H17V142.0H18V143.0H19V143.3H20V143.9H21V145.1H22V144.5H23V144.1H24V142.9H25V142.6H26V140.8H27V139.5H28V137.9H29V135.2H30V132.1H31V131.3H32V126.3H33V125.3H34V125.1H35V125.7H36V129.2H37V128.7H38V126.4H39V129.6H40V134.5H41V137.6H42V139.8H43V139.2H44V141.6H45V142.4H46V142.9H47V143.5H48V143.4H49V143.7H50V142.9H51V141.5H52V141.1H53V139.4H54V139.1H55V139.0H56V138.5H57V138.1H58V139.3H59V139.5H60V138.3H61V138.1H62V135.7H63V135.5H64V134.9H65V132.2H66V130.7H67V131.9H68V128.9H69V128.1H70V127.3H71V126.5H72V126.6H73V125.8H74V125.9H75V126.4H76V131.3H77V134.8H78V137.8H79V138.0H80V135.8H81V136.1H82V136.6H83V137.7H84V135.7H85V135.5H86V138.2H87V137.2H88V135.7H89V130.5H90V129.4H91V130.3H92V128.0H93V128.9H94V128.7H95V131.3H96V132.0H97V131.2H98V135.1H99V134.6H100V138.5H101V137.7H102V138.6H103V137.8H104V138.0H105V137.2H106V138.1H107V139.5H108V138.0H109V139.9H110V138.6H111V136.8H112V135.4H113V136.3H114V132.7H115V128.9H116V126.2H117V128.7H118V127.7H119V124.5H120V128.6H121V129.7H122V127.2H123V130.6H124V129.7H125V131.5H126V134.0H127V133.6H128V135.7H129V137.0H130V138.0H131V137.9H132V136.8H133V133.9H134V132.5H135V131.1H136V130.9H137V133.3H138V129.7H139V130.3H140V134.4H141V133.5H142V136.0H143V134.3H144V137.2H145V136.4H146V139.3H147V137.6H148V135.2H149V136.6H150V135.6H151V134.1H152V133.0H153V129.3H154V132.1H155V128.9H156V126.8H157V129.1H158V128.3H159V127.5H160V128.9H161V128.6H162V128.3H163V129.9H164V131.7H165V134.9H166V138.6H167V139.7H168V140.2H169V140.7H170V141.3H171V139.6H172V139.6H173V136.8H174V137.9H175V137.1H176V138.0H177V140.6H178V141.2H179V142.8H180V144.5H181V144.0H182V144.7H183V144.9H184V144.7H185V144.9H186V144.7H187V145.1H188V145.4H189V145.3H190V145.0H191V145.0H192V141.1H193V137.8H194V131.5H195V130.8H196V129.6H197V129.0H198V133.0H199V132.9H200V129.2H201V127.5H202V125.8H203V124.2H204V126.7H205V123.0H206V124.6H207V124.2H208V128.0H209V130.4H210V133.1H211V131.1H212V131.2H213V128.3H214V126.9H215V132.3H216V133.6H217V134.6H218V138.7H219V139.4H220V139.3H221V138.1H222V138.4H223V133.8H224V123.4H225V115.4H226V122.0H227V117.4H228V117.7H229V117.2H230V115.9H231V115.0H232V113.9H233V117.2H234V111.0H235V118.6H236V111.0H237V115.4H238V119.7H239V119.1H240V122.5H241V129.9H242V129.3H243V132.6H244V134.9H245V137.9H246V140.2H247V140.7H248V140.5H249V139.9H250V141.0H251V141.1H252V137.2H253V134.1H254V129.3H255V130.9H256V130.2H257V132.7H258V131.3H259V134.6H260V137.2H261V140.6H262V141.2H263V140.9H264V141.7H265V142.3H266V142.0H267V142.4H268V143.0H269V142.3H270V138.0H271V134.2H272V129.0H273V125.2H274V124.3H275V124.0H276V123.1H277V125.9H278V124.5H279V129.0H280V127.1H281V129.7H282V132.4H283V131.7H284V134.0H285V136.8H286V135.2H287V137.1H288V136.2H289V136.1H290V138.4H291V136.9H292V139.6H293V139.6H294V140.0H295V140.2H296V142.1H297V142.1H298V142.7H299V144.3H300V144.7H301V143.8H302V141.7H303V137.9H304V135.4H305V134.7H306V133.3H307V134.6H308V133.9H309V132.3H310V130.2H311V130.5H312V130.2H313V131.4H314V129.9H315V131.9H316V134.5H317V136.1H318V137.6H319V140.3H320V139.7H321V138.0H322V137.1H323V136.2H324V136.5H325V135.2H326V136.5H327V136.7H328V137.7H329V136.3H330V136.7H331V137.8H332V139.4H333V139.3H334V140.3H335V141.8H336V141.9H337V142.2H338V142.7H339V143.2H340V143.6H341V143.9H342V140.0H343V135.4H344V130.7H345V132.0H346V132.8H347V130.9H348V132.8H349V134.8H350V132.6H351V132.8H352V134.7H353V135.1H354V136.8H355V138.1H356V139.4H357V139.2H358V138.5H359V137.9H360V137.3H361V137.7H362V136.1H363V135.0H364V133.3H365V129.8H366V126.7H367V126.6H368V125.3H369V124.5H370V128.1H371V130.9H372V133.1H373V136.8H374V139.5H375V139.6H376V140.9H377V141.9H378V142.6H379V143.2H380V143.6H381V144.3H382V144.5H383V142.8H384V140.4H385V138.7H386V137.6H387V135.3H388V134.3H389V132.2H390V127.2H391V128.2H392V127.2H393V129.1H394V131.4H395V129.7H396V127.5H397V128.0H398V130.8H399V131.4H400V133.7H401V135.5H402V136.3H403V136.7H404V139.4H405V140.8H406V140.9H407V142.4H408V140.5H409V139.5H410V138.8H411V138.3H412V139.0H413V139.0H414V140.9H415V141.3H416V139.7H417V135.8H418V133.8H419V134.0H420V130.6H421V129.8H422V131.1H423V131.0H424V129.9H425V131.7H426V136.0H427V137.7H428V137.3H429V138.7H430V138.2H431V138.2H432V140.2H433V139.3H434V139.6H435V139.6H436V140.1H437V141.4H438V140.2H439V140.6H440V139.6H441V140.7H442V139.7H443V139.4H444V136.9H445V131.4H446V129.7H447V129.4H448V131.6H449V132.3H450V131.2H451V129.6H452V130.2H453V130.0H454V131.9H455V129.8H456V130.8H457V133.3H458V134.6H459V136.7H460V138.3H461V140.4H462V142.1H463V142.1H464V143.1H465V143.7H466V144.0H467V144.9H468V143.6H469V143.1H470V142.1H471V140.5H472V140.7H473V140.7H474V139.4H475V139.1H476V139.8H477V139.1H478V140.3H479V140.6H480V140.5H481V141.6H482V142.1H483V142.1H484V142.2H485V143.2H486V143.5H487V143.4H488V144.2H489V142.7H490V141.0H491V140.5H492V138.1H493V137.7H494V139.2H495V138.2H496V139.4H497V140.3H498V141.1H499V140.6H500V138.6H501V139.5H502V138.1H503V136.3H504V136.1H505V133.7H506V132.9H507V131.2H508V133.0H509V129.8H510V129.3H511V131.1H512V126.7H513V128.1H514V131.2H515V129.5H516V131.3H517V134.4H518V133.8H519V135.3H520V135.4H521V137.8H522V138.7H523V139.8H524V139.3H525V140.3H526V139.8H527V141.7H528V141.8H529V142.7H530V143.3H531V143.9H532V145.0H533V145.7H534V145.7H535V145.8H536V145.7H537V145.8H538V145.8H539V145.8H540V145.8H541V145.8H542V145.8H543V145.8H544V145.8H545V145.8H546V145.8H547V145.8H548V145.8H549V145.8H550V145.7H551V145.7H552V145.8H553V145.8H554V145.8H555V145.7H556V145.7H557V145.6H558V145.6H559V145.8H560V145.8H561V145.8H562V145.8H563V145.8H564V148.6H563V148.6H562V148.6H561V148.6H560V148.6H559V148.6H558V148.6H557V148.6H556V148.6H555V148.6H554V148.6H553V148.6H552V148.6H551V148.6H550V148.6H549V148.6H548V148.6H547V148.6H546V148.6H545V148.6H544V148.6H543V148.6H542V148.6H541V148.6H540V148.6H539V148.6H538V148.6H537V148.6H536V148.6H535V148.6H534V148.6H533V148.9H532V149.5H531V150.1H530V151.3H529V152.2H528V152.0H527V152.7H526V153.2H525V154.8H524V155.1H523V155.7H522V156.1H521V155.3H520V155.8H519V156.6H518V156.0H517V157.5H516V156.1H515V157.8H514V157.4H513V159.3H512V159.3H511V158.2H510V156.6H509V157.1H508V157.0H507V156.8H506V155.6H505V155.5H504V157.1H503V154.9H502V155.4H501V154.1H500V154.7H499V155.3H498V153.9H497V156.1H496V156.2H495V156.5H494V156.1H493V155.8H492V154.8H491V152.0H490V150.9H489V149.8H488V149.6H487V150.2H486V150.5H485V150.5H484V150.5H483V151.5H482V151.0H481V151.7H480V152.1H479V151.8H478V151.9H477V152.3H476V151.6H475V152.7H474V152.1H473V152.8H472V151.8H471V151.6H470V151.1H469V150.4H468V149.7H467V150.4H466V150.3H465V151.3H464V152.2H463V151.4H462V152.0H461V153.0H460V155.6H459V156.9H458V157.8H457V158.9H456V158.4H455V159.9H454V159.1H453V160.4H452V162.2H451V160.1H450V161.5H449V162.4H448V163.7H447V164.9H446V164.1H445V159.8H444V157.8H443V156.1H442V155.1H441V154.0H440V152.5H439V152.6H438V152.6H437V153.2H436V153.0H435V154.3H434V153.3H433V154.9H432V155.1H431V156.3H430V156.8H429V156.5H428V156.9H427V157.7H426V161.2H425V159.7H424V160.8H423V162.0H422V162.6H421V165.5H420V165.3H419V162.5H418V163.5H417V157.9H416V153.3H415V153.8H414V153.4H413V154.3H412V154.3H411V155.7H410V155.0H409V152.0H408V150.4H407V151.3H406V151.5H405V152.5H404V153.1H403V154.3H402V155.7H401V158.6H400V158.5H399V162.2H398V161.3H397V163.4H396V163.9H395V163.5H394V161.5H393V161.2H392V161.4H391V163.9H390V160.0H389V160.9H388V158.9H387V155.9H386V154.2H385V152.5H384V150.1H383V149.2H382V149.7H381V150.1H380V150.9H379V151.9H378V152.9H377V153.8H376V155.4H375V155.5H374V158.4H373V158.5H372V162.0H371V161.9H370V164.9H369V164.3H368V161.3H367V161.8H366V163.5H365V162.1H364V161.4H363V162.4H362V161.8H361V157.8H360V159.6H359V157.8H358V156.9H357V154.8H356V154.5H355V155.3H354V155.0H353V158.7H352V158.9H351V161.8H350V161.5H349V163.7H348V165.2H347V164.7H346V164.1H345V164.9H344V158.8H343V154.9H342V150.7H341V149.3H340V149.4H339V150.4H338V150.7H337V151.4H336V151.8H335V152.1H334V152.4H333V153.0H332V152.5H331V153.1H330V155.4H329V156.6H328V157.2H327V160.2H326V160.2H325V160.2H324V157.4H323V158.9H322V158.2H321V157.6H320V158.7H319V161.6H318V164.8H317V167.2H316V167.2H315V168.0H314V166.8H313V168.8H312V172.8H311V172.8H310V168.3H309V165.4H308V165.9H307V163.9H306V159.5H305V157.9H304V155.2H303V152.9H302V150.5H301V149.6H300V150.8H299V151.6H298V151.8H297V152.6H296V153.5H295V154.8H294V154.3H293V156.0H292V156.6H291V157.3H290V155.8H289V159.1H288V160.1H287V158.9H286V159.3H285V162.2H284V164.7H283V162.2H282V163.9H281V169.0H280V169.0H279V164.7H278V167.6H277V166.7H276V165.2H275V161.6H274V160.2H273V156.7H272V155.0H271V153.3H270V151.8H269V151.4H268V151.3H267V151.8H266V152.1H265V152.4H264V152.7H263V153.1H262V152.5H261V155.4H260V157.5H259V159.5H258V159.4H257V162.1H256V162.1H255V161.9H254V161.2H253V158.9H252V159.8H251V159.0H250V158.6H249V156.5H248V157.8H247V158.0H246V158.3H245V158.3H244V159.8H243V158.2H242V159.0H241V163.7H240V161.5H239V163.1H238V168.4H237V167.1H236V166.1H235V171.1H234V169.1H233V171.8H232V173.3H231V176.9H230V174.3H229V180.2H228V183.9H227V178.8H226V181.8H225V175.8H224V165.6H223V162.4H222V159.4H221V158.8H220V158.3H219V157.9H218V158.3H217V164.2H216V165.6H215V164.8H214V168.5H213V168.5H212V166.2H211V169.1H210V171.1H209V171.6H208V174.1H207V173.8H206V173.8H205V173.6H204V172.6H203V165.3H202V167.0H201V165.0H200V162.0H199V159.9H198V160.5H197V160.8H196V160.3H195V161.3H194V157.8H193V153.4H192V149.9H191V149.8H190V149.3H189V149.1H188V148.6H187V149.0H186V149.1H185V149.0H184V149.1H183V149.2H182V149.4H181V149.3H180V150.4H179V151.8H178V153.5H177V155.1H176V156.2H175V155.2H174V155.6H173V155.1H172V154.0H171V152.4H170V153.2H169V153.9H168V154.7H167V156.1H166V161.5H165V165.7H164V164.5H163V167.5H162V169.8H161V169.0H160V172.1H159V172.8H158V169.3H157V172.2H156V167.5H155V168.5H154V165.9H153V166.6H152V163.5H151V162.4H150V160.3H149V158.9H148V159.8H147V157.9H146V157.1H145V157.6H144V156.9H143V156.6H142V159.5H141V158.0H140V161.8H139V162.3H138V161.3H137V161.4H136V162.1H135V158.4H134V159.7H133V159.7H132V161.6H131V162.7H130V162.6H129V166.0H128V162.9H127V166.6H126V166.5H125V169.8H124V166.8H123V173.4H122V173.9H121V175.5H120V171.2H119V174.0H118V176.6H117V169.7H116V171.4H115V166.8H114V165.1H113V162.8H112V158.1H111V156.4H110V155.7H109V155.4H108V157.0H107V156.0H106V158.5H105V159.9H104V158.4H103V161.9H102V161.4H101V165.7H100V165.8H99V167.4H98V171.2H97V169.0H96V169.5H95V168.8H94V167.6H93V170.1H92V168.5H91V166.2H90V160.7H89V156.8H88V154.3H87V155.9H86V154.0H85V155.1H84V154.7H83V155.4H82V155.2H81V155.3H80V157.8H79V156.9H78V159.6H77V163.5H76V163.2H75V164.1H74V166.8H73V166.2H72V164.7H71V162.0H70V162.3H69V158.8H68V159.9H67V157.8H66V159.6H65V158.0H64V156.9H63V156.1H62V155.8H61V155.6H60V155.5H59V155.7H58V154.8H57V153.8H56V154.0H55V153.8H54V152.9H53V152.8H52V152.1H51V151.0H50V151.1H49V150.7H48V151.0H47V153.4H46V154.0H45V155.5H44V158.2H43V158.5H42V161.9H41V164.6H40V166.2H39V165.5H38V166.5H37V168.3H36V171.8H35V168.5H34V170.4H33V172.0H32V165.8H31V167.6H30V164.6H29V159.9H28V158.2H27V154.2H26V153.2H25V152.8H24V152.6H23V151.5H22V150.8H21V152.3H20V153.1H19V152.8H18V154.4H17V154.3H16V155.9H15V155.9H14V158.0H13V157.3H12V158.1H11V156.9H10V156.5H9V157.5H8V155.1H7V155.2H6V156.3H5V155.2H4V154.7H3V152.9H2V153.0H1V151.1H0Z"/></svg>
</div>
<div class="clip" style="left:1510px;top:135px;width:430px;height:274px;background:#38c6d6;box-shadow:0 0 0 1px #0b2a33">
<div class="a" style="left:0;top:0;width:100%;height:21px;background:#03bccf"></div>
<div class="t" style="left:4px;top:4px;font-size:12.5px;color:#0b3347">VO 1</div>
<svg class="a" style="left:0;top:0" width="1620" height="290"><path fill="#0d2429" d="M0 145.9V145.9H1V145.9H2V145.9H3V145.9H4V145.9H5V145.9H6V145.9H7V145.9H8V145.9H9V145.9H10V145.9H11V145.9H12V145.9H13V145.9H14V145.9H15V145.9H16V145.9H17V145.9H18V145.9H19V145.9H20V145.9H21V145.9H22V145.9H23V145.9H24V145.9H25V145.9H26V145.9H27V145.9H28V145.9H29V145.9H30V145.9H31V145.9H32V145.9H33V145.9H34V145.9H35V145.9H36V145.9H37V145.9H38V145.9H39V145.9H40V145.9H41V145.9H42V145.9H43V145.9H44V145.9H45V145.9H46V145.9H47V145.9H48V145.9H49V145.9H50V145.9H51V145.9H52V145.9H53V145.9H54V145.9H55V145.9H56V145.9H57V145.9H58V145.9H59V145.9H60V145.9H61V145.9H62V145.9H63V145.9H64V145.9H65V145.9H66V145.9H67V145.9H68V145.9H69V145.9H70V145.9H71V145.9H72V145.9H73V145.9H74V145.9H75V145.9H76V145.9H77V145.9H78V145.9H79V145.9H80V145.9H81V145.9H82V145.9H83V145.9H84V145.9H85V145.4H86V145.6H87V145.1H88V144.6H89V144.4H90V144.4H91V144.4H92V142.6H93V139.3H94V137.8H95V133.1H96V131.1H97V133.7H98V131.4H99V134.2H100V135.0H101V136.2H102V135.9H103V135.6H104V136.6H105V139.0H106V140.2H107V140.0H108V141.7H109V143.8H110V144.8H111V145.9H112V145.8H113V145.9H114V145.9H115V145.9H116V144.5H117V143.5H118V142.7H119V141.1H120V139.6H121V137.1H122V136.4H123V133.9H124V132.4H125V131.8H126V130.7H127V130.1H128V132.9H129V131.6H130V130.9H131V132.0H132V130.8H133V130.6H134V133.1H135V132.6H136V134.0H137V136.1H138V139.3H139V139.6H140V138.1H141V138.3H142V139.1H143V137.1H144V137.1H145V135.7H146V137.8H147V137.7H148V137.6H149V137.6H150V139.8H151V141.2H152V142.8H153V143.5H154V143.5H155V142.9H156V142.4H157V141.5H158V141.6H159V141.3H160V142.1H161V142.7H162V143.0H163V143.1H164V143.5H165V144.5H166V145.0H167V144.8H168V145.1H169V145.5H170V145.3H171V144.3H172V144.1H173V142.3H174V139.8H175V137.1H176V133.3H177V130.9H178V128.7H179V127.8H180V127.0H181V129.8H182V133.9H183V133.6H184V134.4H185V136.5H186V138.2H187V138.0H188V139.7H189V140.6H190V140.7H191V141.6H192V142.4H193V143.7H194V144.3H195V145.0H196V144.8H197V144.9H198V144.8H199V145.4H200V145.0H201V145.3H202V145.5H203V145.4H204V145.9H205V145.9H206V145.9H207V145.9H208V142.8H209V140.3H210V140.5H211V140.7H212V140.9H213V140.9H214V141.1H215V141.8H216V142.2H217V142.8H218V142.8H219V141.4H220V142.4H221V141.4H222V142.4H223V141.4H224V142.5H225V143.1H226V144.3H227V144.7H228V145.2H229V145.7H230V145.7H231V145.7H232V145.9H233V145.9H234V145.9H235V145.9H236V145.9H237V145.9H238V145.9H239V145.9H240V145.9H241V145.9H242V145.9H243V145.9H244V145.9H245V145.9H246V145.9H247V145.9H248V145.9H249V145.1H250V143.2H251V141.7H252V140.1H253V138.8H254V137.0H255V136.4H256V134.9H257V135.8H258V136.5H259V136.9H260V138.5H261V140.5H262V141.8H263V142.7H264V144.1H265V144.3H266V144.4H267V144.6H268V144.8H269V145.2H270V143.5H271V141.8H272V140.4H273V139.6H274V139.3H275V139.0H276V137.7H277V139.3H278V137.2H279V138.0H280V139.2H281V139.1H282V138.8H283V138.9H284V138.3H285V138.4H286V138.6H287V140.5H288V139.6H289V140.8H290V140.2H291V139.9H292V140.4H293V142.1H294V142.7H295V142.7H296V143.7H297V143.9H298V144.9H299V145.1H300V145.8H301V145.9H302V145.9H303V145.9H304V145.9H305V145.9H306V145.9H307V145.9H308V145.9H309V145.9H310V145.9H311V145.9H312V145.9H313V145.9H314V145.9H315V145.9H316V145.9H317V145.9H318V145.9H319V145.9H320V145.9H321V145.9H322V145.9H323V145.8H324V145.5H325V144.5H326V144.0H327V144.1H328V144.1H329V143.7H330V142.9H331V142.6H332V143.1H333V142.7H334V141.8H335V141.9H336V141.2H337V141.7H338V142.0H339V142.2H340V140.7H341V141.1H342V140.6H343V140.5H344V140.4H345V140.2H346V140.1H347V139.9H348V139.6H349V140.1H350V139.3H351V138.7H352V138.5H353V138.5H354V136.0H355V137.2H356V136.1H357V135.3H358V132.0H359V132.1H360V134.4H361V135.4H362V133.6H363V133.4H364V132.7H365V133.8H366V133.0H367V135.7H368V136.1H369V136.9H370V136.1H371V135.8H372V138.3H373V138.0H374V138.5H375V138.5H376V138.7H377V138.5H378V139.7H379V139.0H380V140.1H381V139.5H382V140.6H383V141.1H384V141.4H385V141.5H386V142.4H387V142.1H388V141.4H389V138.9H390V139.8H391V139.7H392V138.2H393V138.0H394V138.4H395V138.9H396V139.7H397V139.8H398V141.2H399V141.2H400V141.6H401V143.5H402V144.3H403V145.9H404V145.9H405V145.9H406V145.9H407V145.9H408V145.9H409V145.9H410V145.9H411V145.9H412V145.9H413V145.9H414V145.9H415V145.9H416V148.7H415V148.7H414V148.7H413V148.7H412V148.7H411V148.7H410V148.7H409V148.7H408V148.7H407V148.7H406V148.7H405V148.7H404V149.0H403V149.5H402V149.8H401V150.4H400V151.5H399V151.5H398V150.9H397V151.2H396V152.0H395V151.3H394V151.7H393V151.6H392V151.5H391V152.5H390V151.4H389V151.3H388V150.6H387V150.0H386V150.2H385V150.7H384V151.0H383V150.9H382V150.8H381V151.2H380V151.1H379V151.2H378V152.2H377V151.6H376V152.3H375V151.7H374V152.9H373V152.6H372V153.6H371V153.3H370V155.0H369V153.9H368V155.5H367V155.9H366V155.3H365V156.0H364V155.7H363V156.8H362V157.7H361V156.7H360V156.3H359V155.9H358V156.5H357V155.2H356V155.5H355V155.2H354V153.2H353V153.5H352V152.7H351V151.4H350V151.7H349V150.8H348V150.1H347V150.2H346V150.0H345V149.6H344V149.5H343V149.7H342V149.5H341V149.5H340V149.3H339V149.1H338V148.9H337V148.8H336V149.0H335V149.0H334V149.0H333V148.9H332V149.2H331V148.9H330V149.1H329V148.8H328V149.2H327V149.2H326V149.0H325V148.8H324V148.7H323V148.7H322V148.7H321V148.7H320V148.7H319V148.7H318V148.7H317V148.7H316V148.7H315V148.7H314V148.7H313V148.7H312V148.7H311V148.7H310V148.7H309V148.7H308V148.7H307V148.7H306V148.7H305V148.7H304V148.7H303V148.7H302V148.7H301V148.7H300V149.0H299V149.2H298V149.1H297V149.5H296V149.7H295V150.4H294V150.9H293V151.0H292V151.3H291V151.5H290V150.6H289V151.1H288V150.7H287V151.3H286V150.6H285V150.6H284V150.9H283V151.5H282V151.0H281V151.4H280V151.4H279V151.0H278V150.9H277V150.9H276V150.6H275V150.4H274V150.2H273V150.5H272V150.1H271V149.8H270V149.8H269V149.9H268V150.0H267V149.8H266V150.2H265V150.1H264V150.2H263V151.0H262V151.6H261V151.2H260V152.5H259V152.7H258V152.6H257V153.2H256V151.9H255V151.7H254V151.6H253V151.1H252V150.4H251V149.6H250V149.4H249V148.7H248V148.7H247V148.7H246V148.7H245V148.7H244V148.7H243V148.7H242V148.7H241V148.7H240V148.7H239V148.7H238V148.7H237V148.7H236V148.7H235V148.7H234V148.7H233V148.7H232V148.7H231V148.7H230V148.7H229V148.7H228V148.7H227V148.7H226V148.7H225V149.0H224V148.8H223V148.8H222V149.2H221V149.3H220V149.5H219V149.1H218V149.4H217V149.5H216V149.5H215V150.1H214V150.2H213V150.4H212V150.6H211V150.2H210V150.6H209V150.3H208V149.7H207V149.5H206V149.6H205V149.7H204V149.5H203V149.6H202V149.6H201V150.1H200V150.1H199V150.5H198V150.2H197V151.2H196V151.5H195V150.8H194V151.6H193V152.0H192V151.9H191V152.5H190V152.4H189V152.9H188V152.5H187V152.9H186V152.9H185V153.6H184V153.7H183V153.3H182V154.1H181V153.6H180V154.1H179V154.8H178V154.3H177V153.3H176V151.9H175V152.0H174V150.8H173V150.4H172V149.9H171V150.2H170V149.8H169V150.2H168V150.6H167V150.6H166V151.8H165V151.8H164V151.8H163V152.7H162V153.4H161V152.5H160V153.7H159V153.1H158V153.4H157V152.6H156V152.3H155V152.0H154V152.0H153V151.7H152V152.6H151V152.0H150V152.8H149V153.8H148V154.6H147V153.5H146V154.2H145V153.5H144V153.1H143V153.3H142V154.0H141V155.4H140V155.0H139V154.4H138V155.8H137V156.2H136V155.5H135V157.3H134V156.2H133V157.1H132V158.0H131V159.4H130V158.0H129V158.1H128V159.9H127V158.9H126V157.9H125V158.5H124V155.5H123V155.5H122V154.7H121V153.5H120V152.3H119V151.8H118V150.9H117V149.4H116V148.9H115V148.8H114V148.9H113V149.0H112V148.8H111V149.8H110V151.0H109V151.6H108V153.9H107V155.0H106V154.7H105V155.9H104V156.1H103V155.9H102V158.5H101V157.4H100V159.1H99V156.8H98V159.1H97V159.4H96V156.0H95V154.9H94V154.2H93V152.2H92V150.8H91V150.7H90V150.7H89V149.9H88V149.7H87V149.7H86V149.2H85V149.2H84V148.8H83V148.7H82V148.7H81V148.7H80V148.7H79V148.7H78V148.7H77V148.7H76V148.7H75V148.7H74V148.7H73V148.7H72V148.7H71V148.7H70V148.7H69V148.7H68V148.7H67V148.7H66V148.7H65V148.7H64V148.7H63V148.7H62V148.7H61V148.7H60V148.7H59V148.7H58V148.7H57V148.7H56V148.7H55V148.7H54V148.7H53V148.7H52V148.7H51V148.7H50V148.7H49V148.7H48V148.7H47V148.7H46V148.7H45V148.7H44V148.7H43V148.7H42V148.7H41V148.7H40V148.7H39V148.7H38V148.7H37V148.7H36V148.7H35V148.7H34V148.7H33V148.7H32V148.7H31V148.7H30V148.7H29V148.7H28V148.7H27V148.7H26V148.7H25V148.7H24V148.7H23V148.7H22V148.7H21V148.7H20V148.7H19V148.7H18V148.7H17V148.7H16V148.7H15V148.7H14V148.7H13V148.7H12V148.7H11V148.7H10V148.7H9V148.7H8V148.7H7V148.7H6V148.7H5V148.7H4V148.7H3V148.7H2V148.7H1V148.7H0Z"/></svg>
</div>
<div class="clip" style="left:1225px;top:413px;width:720px;height:257px;background:#6aabf9;box-shadow:0 0 0 1px #0a2550">
<div class="a" style="left:0;top:0;width:100%;height:21px;background:#4a9bf6"></div>
<div class="t" style="left:3px;top:2.5px;font-size:13px;color:#0a1f4d">VO 2</div>
<svg class="a" style="left:0;top:0" width="1620" height="290"><path fill="#13233a" d="M0 138.2V138.2H1V138.2H2V138.2H3V138.2H4V138.2H5V138.2H6V138.2H7V138.2H8V138.2H9V138.2H10V138.2H11V138.2H12V138.2H13V138.2H14V138.2H15V138.2H16V138.2H17V138.2H18V138.2H19V138.2H20V138.2H21V138.2H22V138.2H23V138.2H24V138.2H25V138.2H26V138.2H27V138.2H28V138.2H29V138.2H30V138.2H31V138.2H32V138.2H33V138.2H34V138.2H35V138.2H36V138.2H37V138.2H38V138.2H39V138.2H40V138.2H41V138.2H42V138.2H43V138.2H44V138.2H45V138.2H46V138.2H47V137.8H48V134.3H49V129.2H50V122.1H51V119.9H52V120.0H53V119.0H54V116.6H55V119.1H56V124.9H57V119.9H58V123.2H59V119.2H60V118.5H61V117.8H62V118.2H63V122.8H64V122.1H65V123.0H66V121.0H67V119.8H68V121.7H69V122.5H70V123.5H71V120.1H72V120.0H73V119.8H74V122.5H75V122.4H76V121.2H77V119.1H78V117.4H79V120.4H80V119.0H81V116.0H82V118.5H83V117.3H84V121.7H85V120.1H86V124.0H87V122.0H88V121.9H89V124.0H90V126.9H91V127.0H92V127.7H93V130.1H94V130.1H95V131.1H96V132.2H97V133.8H98V134.4H99V134.0H100V134.4H101V134.7H102V135.1H103V135.7H104V135.0H105V133.6H106V131.8H107V117.7H108V106.1H109V102.2H110V102.5H111V102.4H112V105.9H113V108.5H114V104.0H115V109.3H116V114.9H117V119.3H118V126.5H119V130.4H120V132.0H121V134.3H122V136.0H123V137.0H124V136.7H125V136.7H126V137.2H127V137.1H128V136.7H129V137.0H130V137.0H131V134.4H132V132.0H133V131.2H134V126.6H135V128.0H136V124.9H137V126.1H138V124.0H139V128.6H140V129.9H141V133.1H142V135.0H143V135.9H144V136.9H145V136.6H146V136.9H147V137.0H148V137.7H149V137.9H150V133.2H151V128.9H152V123.9H153V119.1H154V115.7H155V116.7H156V113.4H157V114.7H158V118.8H159V122.5H160V122.2H161V122.8H162V123.4H163V126.5H164V122.2H165V123.0H166V122.9H167V125.2H168V125.0H169V125.7H170V125.9H171V125.2H172V126.5H173V126.1H174V129.1H175V130.3H176V132.3H177V133.2H178V135.0H179V135.1H180V135.9H181V136.2H182V136.4H183V137.1H184V137.1H185V135.1H186V134.3H187V133.6H188V130.6H189V131.0H190V130.1H191V130.1H192V128.6H193V126.3H194V126.3H195V126.2H196V121.2H197V124.7H198V124.1H199V124.8H200V127.0H201V125.6H202V127.0H203V128.0H204V129.6H205V132.5H206V133.2H207V134.2H208V133.3H209V124.6H210V119.4H211V121.7H212V122.7H213V122.6H214V122.6H215V122.7H216V125.0H217V122.1H218V124.8H219V122.9H220V123.8H221V121.9H222V124.1H223V127.3H224V130.0H225V131.9H226V135.3H227V136.0H228V136.0H229V136.8H230V136.7H231V136.9H232V137.5H233V137.9H234V136.3H235V134.2H236V133.6H237V130.0H238V128.1H239V127.8H240V123.3H241V118.9H242V121.2H243V116.4H244V114.4H245V112.6H246V117.5H247V120.8H248V121.9H249V126.4H250V126.4H251V125.4H252V125.6H253V124.1H254V125.8H255V126.1H256V126.9H257V123.7H258V126.9H259V125.7H260V125.1H261V124.2H262V125.5H263V127.9H264V127.4H265V126.6H266V127.2H267V127.9H268V126.6H269V129.8H270V128.0H271V130.5H272V130.9H273V131.1H274V130.9H275V128.7H276V127.2H277V125.9H278V126.7H279V125.7H280V128.0H281V127.9H282V128.1H283V129.3H284V131.9H285V132.8H286V132.9H287V134.1H288V135.5H289V136.4H290V136.6H291V137.2H292V134.4H293V130.1H294V125.1H295V119.4H296V119.0H297V119.0H298V121.5H299V124.5H300V124.1H301V125.0H302V127.6H303V128.2H304V128.0H305V129.6H306V129.5H307V128.6H308V126.7H309V129.0H310V126.6H311V129.3H312V127.0H313V125.2H314V124.7H315V124.4H316V124.9H317V125.0H318V122.9H319V122.9H320V122.0H321V122.2H322V121.7H323V124.6H324V123.8H325V124.4H326V124.0H327V120.7H328V123.6H329V120.7H330V122.7H331V120.8H332V121.2H333V122.8H334V126.3H335V126.8H336V125.8H337V126.7H338V129.0H339V128.1H340V130.9H341V133.7H342V134.5H343V137.4H344V138.0H345V137.8H346V138.2H347V138.2H348V138.2H349V137.8H350V135.8H351V135.3H352V132.8H353V131.4H354V130.8H355V129.9H356V129.9H357V130.8H358V131.4H359V132.1H360V133.5H361V134.1H362V133.8H363V135.0H364V135.3H365V135.5H366V132.9H367V127.2H368V121.5H369V111.4H370V94.6H371V91.8H372V77.2H373V82.7H374V81.9H375V71.7H376V71.7H377V80.7H378V87.0H379V91.9H380V81.8H381V87.8H382V104.2H383V108.1H384V117.4H385V118.3H386V118.1H387V118.9H388V122.2H389V116.9H390V121.8H391V116.5H392V120.8H393V119.0H394V127.6H395V132.5H396V134.1H397V134.1H398V134.3H399V134.3H400V133.8H401V134.2H402V133.1H403V133.5H404V132.7H405V133.5H406V134.3H407V135.8H408V136.5H409V137.1H410V138.0H411V137.8H412V138.2H413V137.7H414V137.5H415V132.7H416V128.0H417V127.0H418V122.6H419V121.1H420V122.7H421V121.1H422V121.3H423V126.4H424V125.5H425V125.0H426V126.2H427V129.5H428V131.1H429V133.9H430V135.9H431V137.1H432V137.6H433V138.0H434V138.2H435V138.2H436V138.2H437V138.2H438V138.2H439V138.2H440V138.2H441V138.2H442V138.2H443V138.2H444V138.2H445V138.2H446V138.2H447V138.2H448V138.2H449V138.2H450V138.2H451V138.2H452V138.2H453V138.2H454V138.2H455V138.2H456V138.2H457V138.2H458V138.2H459V138.2H460V138.2H461V138.2H462V138.2H463V138.2H464V138.2H465V138.2H466V138.2H467V138.2H468V138.2H469V138.2H470V138.2H471V138.2H472V138.2H473V138.2H474V138.2H475V138.2H476V138.2H477V138.2H478V138.2H479V138.2H480V138.2H481V138.2H482V138.2H483V138.2H484V138.2H485V138.2H486V138.2H487V138.2H488V138.2H489V138.2H490V138.2H491V138.2H492V138.2H493V138.2H494V138.2H495V138.2H496V138.2H497V138.2H498V137.8H499V129.1H500V123.0H501V121.7H502V124.2H503V125.2H504V124.9H505V123.4H506V122.7H507V118.9H508V117.1H509V114.0H510V113.5H511V110.6H512V105.4H513V104.6H514V101.8H515V97.6H516V104.6H517V103.9H518V111.8H519V112.7H520V120.2H521V123.4H522V130.4H523V133.0H524V132.0H525V133.6H526V134.3H527V134.2H528V135.3H529V135.1H530V135.9H531V136.0H532V137.0H533V136.9H534V132.8H535V122.3H536V123.7H537V126.1H538V125.0H539V124.9H540V128.4H541V129.8H542V130.2H543V132.1H544V132.4H545V132.1H546V132.3H547V130.5H548V127.8H549V125.1H550V125.6H551V122.9H552V121.9H553V117.4H554V115.7H555V119.7H556V117.4H557V121.2H558V122.4H559V123.5H560V124.8H561V125.7H562V127.8H563V127.3H564V128.1H565V130.0H566V129.5H567V129.5H568V125.8H569V124.0H570V124.4H571V120.9H572V116.2H573V118.0H574V116.8H575V117.7H576V122.1H577V126.3H578V126.7H579V130.8H580V129.9H581V129.8H582V130.6H583V129.0H584V131.5H585V129.5H586V131.4H587V130.4H588V130.2H589V129.6H590V130.5H591V130.0H592V131.1H593V131.5H594V130.9H595V129.9H596V127.6H597V128.0H598V128.7H599V128.7H600V127.4H601V125.6H602V128.9H603V127.7H604V127.0H605V127.9H606V129.9H607V131.9H608V134.5H609V134.3H610V134.0H611V134.6H612V135.2H613V135.4H614V134.4H615V133.3H616V131.5H617V129.6H618V127.8H619V125.3H620V127.0H621V121.9H622V118.9H623V115.9H624V114.5H625V112.8H626V113.2H627V114.8H628V115.4H629V111.8H630V118.1H631V118.7H632V115.8H633V117.3H634V120.4H635V119.7H636V120.5H637V124.5H638V125.4H639V124.3H640V126.4H641V125.0H642V126.3H643V128.9H644V127.2H645V126.2H646V128.4H647V124.2H648V123.9H649V122.9H650V121.3H651V122.9H652V121.1H653V124.1H654V124.0H655V123.2H656V124.9H657V125.8H658V123.4H659V124.5H660V126.9H661V128.0H662V129.0H663V131.3H664V132.9H665V133.6H666V133.6H667V133.2H668V133.5H669V134.3H670V134.1H671V133.3H672V133.3H673V132.8H674V131.7H675V129.0H676V129.2H677V127.3H678V126.5H679V129.1H680V127.0H681V128.8H682V129.8H683V131.8H684V132.3H685V133.7H686V135.7H687V136.5H688V136.6H689V136.6H690V136.3H691V136.5H692V136.3H693V136.3H694V136.7H695V137.1H696V136.8H697V136.9H698V136.9H699V137.3H700V137.4H701V140.8H700V141.0H699V141.0H698V140.8H697V141.0H696V141.0H695V140.9H694V141.2H693V141.0H692V141.1H691V141.0H690V141.2H689V141.0H688V141.1H687V141.5H686V142.7H685V143.3H684V143.3H683V143.7H682V145.0H681V145.6H680V144.8H679V145.7H678V144.4H677V145.4H676V145.2H675V145.8H674V144.2H673V144.6H672V143.6H671V142.7H670V142.3H669V143.5H668V143.8H667V144.0H666V144.1H665V143.4H664V145.0H663V144.5H662V145.5H661V145.9H660V145.4H659V147.5H658V147.4H657V147.4H656V147.2H655V146.5H654V148.7H653V146.6H652V148.7H651V147.4H650V148.5H649V148.0H648V148.1H647V147.4H646V147.4H645V146.2H644V147.3H643V146.5H642V146.8H641V146.6H640V145.3H639V146.5H638V147.0H637V147.1H636V146.6H635V146.7H634V147.6H633V149.2H632V148.1H631V149.7H630V148.5H629V149.3H628V148.1H627V149.9H626V148.5H625V147.7H624V146.6H623V146.8H622V144.7H621V144.5H620V143.9H619V143.1H618V143.5H617V142.1H616V141.6H615V141.6H614V141.9H613V141.8H612V141.7H611V142.4H610V142.3H609V143.0H608V143.9H607V144.7H606V146.0H605V147.0H604V146.5H603V146.1H602V147.0H601V145.9H600V145.2H599V146.8H598V146.7H597V146.3H596V145.2H595V146.0H594V145.1H593V146.0H592V145.6H591V144.6H590V144.7H589V145.4H588V145.2H587V144.4H586V146.2H585V145.6H584V145.3H583V147.4H582V146.7H581V146.2H580V147.7H579V149.6H578V150.4H577V153.0H576V154.5H575V153.9H574V155.4H573V154.9H572V152.5H571V151.2H570V148.5H569V146.9H568V146.8H567V146.9H566V146.5H565V145.9H564V146.9H563V147.6H562V149.0H561V151.4H560V153.1H559V152.7H558V153.2H557V157.5H556V158.4H555V154.9H554V156.2H553V156.5H552V155.2H551V150.5H550V149.6H549V149.2H548V147.7H547V145.7H546V143.5H545V143.1H544V143.4H543V145.3H542V144.9H541V145.7H540V148.3H539V148.5H538V148.1H537V148.6H536V150.3H535V144.0H534V141.3H533V141.3H532V142.1H531V141.9H530V142.1H529V142.3H528V142.5H527V143.1H526V144.1H525V144.0H524V145.4H523V146.5H522V149.9H521V153.3H520V160.3H519V160.3H518V159.4H517V158.0H516V163.5H515V158.2H514V163.2H513V161.4H512V157.3H511V159.3H510V153.6H509V153.9H508V153.4H507V152.9H506V151.0H505V148.8H504V147.6H503V146.4H502V147.3H501V146.5H500V144.1H499V140.9H498V140.8H497V140.8H496V140.8H495V140.8H494V140.8H493V140.8H492V140.8H491V140.8H490V140.8H489V140.8H488V140.8H487V140.8H486V140.8H485V140.8H484V140.8H483V140.8H482V140.8H481V140.8H480V140.8H479V140.8H478V140.8H477V140.8H476V140.8H475V140.8H474V140.8H473V140.8H472V140.8H471V140.8H470V140.8H469V140.8H468V140.8H467V140.8H466V140.8H465V140.8H464V140.8H463V140.8H462V140.8H461V140.8H460V140.8H459V140.8H458V140.8H457V140.8H456V140.8H455V140.8H454V140.8H453V140.8H452V140.8H451V140.8H450V140.8H449V140.8H448V140.8H447V140.8H446V140.8H445V140.8H444V140.8H443V140.8H442V140.8H441V140.8H440V140.8H439V140.8H438V140.8H437V140.8H436V140.8H435V140.8H434V140.8H433V141.1H432V141.5H431V141.9H430V142.9H429V143.9H428V144.5H427V146.4H426V146.5H425V146.4H424V147.7H423V146.9H422V147.1H421V147.9H420V148.6H419V146.5H418V145.9H417V146.1H416V142.8H415V141.0H414V140.8H413V140.8H412V140.8H411V140.8H410V140.8H409V141.1H408V141.7H407V141.5H406V142.3H405V142.9H404V142.5H403V142.3H402V142.6H401V142.8H400V142.4H399V142.2H398V143.1H397V143.4H396V144.1H395V145.4H394V147.5H393V149.0H392V149.2H391V149.6H390V152.3H389V151.9H388V153.4H387V153.7H386V157.9H385V172.4H384V178.9H383V194.8H382V191.1H381V199.9H380V203.6H379V202.6H378V187.2H377V190.7H376V181.8H375V189.7H374V186.5H373V184.0H372V178.2H371V164.4H370V158.0H369V149.4H368V144.5H367V142.7H366V141.7H365V141.6H364V141.7H363V142.1H362V141.9H361V141.9H360V142.4H359V142.4H358V142.7H357V142.5H356V142.4H355V142.1H354V141.9H353V142.2H352V141.2H351V141.3H350V140.8H349V140.8H348V140.8H347V140.8H346V140.8H345V140.8H344V140.9H343V143.0H342V144.4H341V145.7H340V147.8H339V147.3H338V147.3H337V147.9H336V148.2H335V147.8H334V148.1H333V148.5H332V147.4H331V147.7H330V146.6H329V146.5H328V147.4H327V148.9H326V148.5H325V146.8H324V146.9H323V148.5H322V147.5H321V148.2H320V146.8H319V147.9H318V147.2H317V147.5H316V146.7H315V147.2H314V147.0H313V146.0H312V147.2H311V146.7H310V146.8H309V146.9H308V145.8H307V145.9H306V146.3H305V145.3H304V145.0H303V145.5H302V147.0H301V146.3H300V149.6H299V148.5H298V148.3H297V149.4H296V150.1H295V148.4H294V145.8H293V143.4H292V140.8H291V141.0H290V141.0H289V141.3H288V141.1H287V141.5H286V141.6H285V142.0H284V143.0H283V143.2H282V143.1H281V144.2H280V143.9H279V143.9H278V143.6H277V142.9H276V142.8H275V143.1H274V142.7H273V143.2H272V143.6H271V143.8H270V144.9H269V145.4H268V146.0H267V146.1H266V145.0H265V146.4H264V146.6H263V145.2H262V145.9H261V145.5H260V145.6H259V145.4H258V147.0H257V146.3H256V145.6H255V145.5H254V145.4H253V146.4H252V145.3H251V146.3H250V146.3H249V146.7H248V146.7H247V148.5H246V148.0H245V147.9H244V147.4H243V148.3H242V146.9H241V146.6H240V146.8H239V145.3H238V143.9H237V143.8H236V142.7H235V141.4H234V140.9H233V140.8H232V141.0H231V140.8H230V141.1H229V141.1H228V141.0H227V141.2H226V143.1H225V144.1H224V144.5H223V146.2H222V146.9H221V148.0H220V146.4H219V147.8H218V147.7H217V147.0H216V148.5H215V147.5H214V146.9H213V147.5H212V147.3H211V147.4H210V147.1H209V143.0H208V143.0H207V143.7H206V144.3H205V145.9H204V146.7H203V145.7H202V148.0H201V147.6H200V149.3H199V147.5H198V149.6H197V149.8H196V147.4H195V147.9H194V148.0H193V147.1H192V146.1H191V145.5H190V143.9H189V143.7H188V143.8H187V142.4H186V141.8H185V141.0H184V140.8H183V141.0H182V140.9H181V140.8H180V141.3H179V141.0H178V142.4H177V143.5H176V144.7H175V145.5H174V147.0H173V146.1H172V146.4H171V145.9H170V146.2H169V145.8H168V146.1H167V146.5H166V146.6H165V146.0H164V145.5H163V145.5H162V146.2H161V144.8H160V147.2H159V149.1H158V151.8H157V151.7H156V149.1H155V151.3H154V149.4H153V148.9H152V146.2H151V143.4H150V140.8H149V140.8H148V140.8H147V141.1H146V141.1H145V141.3H144V141.2H143V141.6H142V142.3H141V144.0H140V144.7H139V144.2H138V144.8H137V144.4H136V144.2H135V143.3H134V142.6H133V142.5H132V142.1H131V141.6H130V141.4H129V141.5H128V141.6H127V141.9H126V141.4H125V141.7H124V142.1H123V142.3H122V143.7H121V144.6H120V144.0H119V147.1H118V147.9H117V149.9H116V154.9H115V154.2H114V155.8H113V154.7H112V153.5H111V154.8H110V157.4H109V153.8H108V152.0H107V146.7H106V146.1H105V144.4H104V142.7H103V142.4H102V142.7H101V142.3H100V142.6H99V143.0H98V144.0H97V144.2H96V143.7H95V144.7H94V145.1H93V146.8H92V147.6H91V148.3H90V148.5H89V149.8H88V148.6H87V149.8H86V149.8H85V149.9H84V153.6H83V154.0H82V154.2H81V156.2H80V155.5H79V156.2H78V156.7H77V154.6H76V157.3H75V155.9H74V155.0H73V155.6H72V154.9H71V154.1H70V154.2H69V152.3H68V155.0H67V152.4H66V152.4H65V155.0H64V153.2H63V153.0H62V154.1H61V152.9H60V153.4H59V151.9H58V150.3H57V147.1H56V149.1H55V151.6H54V151.6H53V152.0H52V152.8H51V151.1H50V149.9H49V145.8H48V141.2H47V140.8H46V140.8H45V140.8H44V140.8H43V140.8H42V140.8H41V140.8H40V140.8H39V140.8H38V140.8H37V140.8H36V140.8H35V140.8H34V140.8H33V140.8H32V140.8H31V140.8H30V140.8H29V140.8H28V140.8H27V140.8H26V140.8H25V140.8H24V140.8H23V140.8H22V140.8H21V140.8H20V140.8H19V140.8H18V140.8H17V140.8H16V140.8H15V140.8H14V140.8H13V140.8H12V140.8H11V140.8H10V140.8H9V140.8H8V140.8H7V140.8H6V140.8H5V140.8H4V140.8H3V140.8H2V140.8H1V140.8H0Z"/></svg>
</div>
<div class="clip" style="border-radius:0;left:311px;top:674px;width:1630px;height:280px;background:#e697d5;box-shadow:0 0 0 1px #3a1a38">
<div class="a" style="left:0;top:0;width:100%;height:22px;background:#e07dc7"></div>
<div class="t" style="left:18px;top:4px;font-size:13.2px;color:#2c1230">BG MUZIK</div>
<svg class="a" style="left:0;top:0" width="1620" height="290"><path fill="#2b1424" d="M0 141.5V141.5H1V142.2H2V142.4H3V141.1H4V144.0H5V142.9H6V144.4H7V146.3H8V146.8H9V146.9H10V146.6H11V147.1H12V148.7H13V148.5H14V149.1H15V149.9H16V150.2H17V150.3H18V150.3H19V150.3H20V150.3H21V150.3H22V150.3H23V150.3H24V150.3H25V150.3H26V150.3H27V150.3H28V150.3H29V150.3H30V150.3H31V150.3H32V150.3H33V150.3H34V147.4H35V141.6H36V141.4H37V142.2H38V138.3H39V140.7H40V140.4H41V130.7H42V117.7H43V108.1H44V104.2H45V99.2H46V91.9H47V85.0H48V82.1H49V81.5H50V93.5H51V75.2H52V87.9H53V76.5H54V75.9H55V78.3H56V90.3H57V104.6H58V106.9H59V125.6H60V125.6H61V129.2H62V132.6H63V130.3H64V134.4H65V130.3H66V131.8H67V133.7H68V135.1H69V140.1H70V141.0H71V142.4H72V137.8H73V138.1H74V134.6H75V135.9H76V131.6H77V126.2H78V129.8H79V130.2H80V131.1H81V131.0H82V131.6H83V129.3H84V132.1H85V131.7H86V133.0H87V131.1H88V137.0H89V136.8H90V134.7H91V134.4H92V137.7H93V135.3H94V135.9H95V137.8H96V137.4H97V136.4H98V139.2H99V137.7H100V140.5H101V128.1H102V122.4H103V117.8H104V110.0H105V117.3H106V125.4H107V143.9H108V144.5H109V142.1H110V143.5H111V141.8H112V141.2H113V143.0H114V142.2H115V143.2H116V143.6H117V141.2H118V141.2H119V142.8H120V142.9H121V143.5H122V142.0H123V141.1H124V141.9H125V141.0H126V140.6H127V142.2H128V140.0H129V138.4H130V139.6H131V139.8H132V140.8H133V138.3H134V139.0H135V139.4H136V135.8H137V135.2H138V135.4H139V137.2H140V138.3H141V137.4H142V137.8H143V138.5H144V138.4H145V135.3H146V136.0H147V136.9H148V139.3H149V140.4H150V139.2H151V142.0H152V140.0H153V141.7H154V142.5H155V141.6H156V141.2H157V143.4H158V142.3H159V142.1H160V141.9H161V141.3H162V142.1H163V142.9H164V142.7H165V144.2H166V146.9H167V147.8H168V148.0H169V146.5H170V145.1H171V145.3H172V144.0H173V140.8H174V139.9H175V139.9H176V137.4H177V139.3H178V134.7H179V138.7H180V138.1H181V138.1H182V143.3H183V144.7H184V145.6H185V146.5H186V148.3H187V148.7H188V149.7H189V149.1H190V147.6H191V147.7H192V145.8H193V144.4H194V144.8H195V143.7H196V144.3H197V145.1H198V144.3H199V144.7H200V145.4H201V146.8H202V146.4H203V146.5H204V145.8H205V145.7H206V143.5H207V144.9H208V142.9H209V140.7H210V140.2H211V139.4H212V138.9H213V138.3H214V138.6H215V139.5H216V138.9H217V139.2H218V140.1H219V140.8H220V142.1H221V144.0H222V143.2H223V145.8H224V145.4H225V145.9H226V145.9H227V146.5H228V145.5H229V146.6H230V146.2H231V146.0H232V147.3H233V147.3H234V147.6H235V146.9H236V147.1H237V148.4H238V148.5H239V148.6H240V149.2H241V149.7H242V150.3H243V150.3H244V150.3H245V150.3H246V150.3H247V150.3H248V150.3H249V150.3H250V150.3H251V150.3H252V150.3H253V150.3H254V150.3H255V150.3H256V150.3H257V150.3H258V150.3H259V150.3H260V150.3H261V150.3H262V150.3H263V150.3H264V150.3H265V150.3H266V150.3H267V150.3H268V150.3H269V150.3H270V150.3H271V150.3H272V150.3H273V150.3H274V150.3H275V150.3H276V150.3H277V150.3H278V150.3H279V150.3H280V150.3H281V150.3H282V150.3H283V150.3H284V150.3H285V150.3H286V150.3H287V150.3H288V150.3H289V150.3H290V150.3H291V150.3H292V150.3H293V150.3H294V150.3H295V150.3H296V150.3H297V150.3H298V150.3H299V150.3H300V150.3H301V150.3H302V150.3H303V150.3H304V150.3H305V150.3H306V150.3H307V150.3H308V150.3H309V150.3H310V149.5H311V138.5H312V132.5H313V131.3H314V124.3H315V121.7H316V123.8H317V116.2H318V113.9H319V114.0H320V115.7H321V123.1H322V122.1H323V115.3H324V116.4H325V125.8H326V123.4H327V127.4H328V128.4H329V134.8H330V133.4H331V137.8H332V140.0H333V140.4H334V145.0H335V143.7H336V145.9H337V146.9H338V146.8H339V147.5H340V147.6H341V148.3H342V149.1H343V148.9H344V149.4H345V149.7H346V149.9H347V150.1H348V150.2H349V150.1H350V148.8H351V146.0H352V144.5H353V144.1H354V141.3H355V140.3H356V137.5H357V133.6H358V132.6H359V130.1H360V130.5H361V131.6H362V130.1H363V134.4H364V131.6H365V133.4H366V134.2H367V131.9H368V131.7H369V135.2H370V133.8H371V135.7H372V130.1H373V135.9H374V130.1H375V130.8H376V133.1H377V130.8H378V135.0H379V132.8H380V136.9H381V135.7H382V134.1H383V135.5H384V136.2H385V135.9H386V133.8H387V135.1H388V139.2H389V140.6H390V139.1H391V142.0H392V140.8H393V140.6H394V141.7H395V142.5H396V141.7H397V139.4H398V141.3H399V139.7H400V142.7H401V140.2H402V143.0H403V143.1H404V141.4H405V141.7H406V141.9H407V143.9H408V145.3H409V146.3H410V146.8H411V148.2H412V149.6H413V150.2H414V150.0H415V150.3H416V150.3H417V150.3H418V150.3H419V150.3H420V150.3H421V150.3H422V150.3H423V150.3H424V150.3H425V150.3H426V150.3H427V150.3H428V150.3H429V150.3H430V150.3H431V150.3H432V150.3H433V150.3H434V150.3H435V150.3H436V150.3H437V150.3H438V150.3H439V150.3H440V150.3H441V150.3H442V150.3H443V150.3H444V150.3H445V150.3H446V150.3H447V150.3H448V150.3H449V150.3H450V150.3H451V150.3H452V150.3H453V150.3H454V150.3H455V150.3H456V150.3H457V150.3H458V150.3H459V150.3H460V150.3H461V150.3H462V150.3H463V150.3H464V150.3H465V150.3H466V150.3H467V150.3H468V150.3H469V150.3H470V150.3H471V150.3H472V150.3H473V150.3H474V150.3H475V150.3H476V150.3H477V150.3H478V150.3H479V150.3H480V150.3H481V150.3H482V150.3H483V150.3H484V150.3H485V150.3H486V150.3H487V150.3H488V150.3H489V150.3H490V150.3H491V150.3H492V150.3H493V150.3H494V150.3H495V150.3H496V150.3H497V150.3H498V150.3H499V150.3H500V150.3H501V150.3H502V150.3H503V150.3H504V150.3H505V150.3H506V150.3H507V150.3H508V150.3H509V150.3H510V150.3H511V150.3H512V150.3H513V150.3H514V150.3H515V150.3H516V150.3H517V150.3H518V150.3H519V150.3H520V150.3H521V150.3H522V150.3H523V150.3H524V150.3H525V150.3H526V150.3H527V150.3H528V150.3H529V150.3H530V150.3H531V150.3H532V150.3H533V150.3H534V150.3H535V150.3H536V150.2H537V148.9H538V146.5H539V145.7H540V146.5H541V145.4H542V146.0H543V147.5H544V147.7H545V148.4H546V149.2H547V149.6H548V150.0H549V150.3H550V150.3H551V150.3H552V150.3H553V150.3H554V150.3H555V150.3H556V150.3H557V150.3H558V150.3H559V150.3H560V150.3H561V150.3H562V150.3H563V150.3H564V150.3H565V150.3H566V150.3H567V150.3H568V150.3H569V150.3H570V150.3H571V150.3H572V150.3H573V150.3H574V150.3H575V150.3H576V150.3H577V150.3H578V150.3H579V150.3H580V150.3H581V150.3H582V150.3H583V150.3H584V150.3H585V150.3H586V150.3H587V150.3H588V150.3H589V150.3H590V150.3H591V150.3H592V150.3H593V150.3H594V150.3H595V150.3H596V150.3H597V149.5H598V132.2H599V134.7H600V121.5H601V122.1H602V113.7H603V115.4H604V123.1H605V124.9H606V126.4H607V133.1H608V138.5H609V139.1H610V144.9H611V145.7H612V144.1H613V135.6H614V131.3H615V122.5H616V119.9H617V116.2H618V119.3H619V125.9H620V127.3H621V129.5H622V137.6H623V137.8H624V140.8H625V141.3H626V142.8H627V145.1H628V146.1H629V146.2H630V146.9H631V145.6H632V146.2H633V146.2H634V145.2H635V147.0H636V146.0H637V147.2H638V147.8H639V147.8H640V148.1H641V148.1H642V147.1H643V146.6H644V145.6H645V144.1H646V144.3H647V142.5H648V143.0H649V142.7H650V140.7H651V139.7H652V138.0H653V140.4H654V136.8H655V134.8H656V136.1H657V126.3H658V121.9H659V110.9H660V108.0H661V96.0H662V104.7H663V96.7H664V92.2H665V92.7H666V101.9H667V110.2H668V110.8H669V109.2H670V114.9H671V123.2H672V129.5H673V137.9H674V138.0H675V142.6H676V142.0H677V145.3H678V144.8H679V140.9H680V138.1H681V137.0H682V137.8H683V131.4H684V132.2H685V133.0H686V130.5H687V125.1H688V130.3H689V131.8H690V132.6H691V132.6H692V137.0H693V135.7H694V135.0H695V136.8H696V140.1H697V140.2H698V142.8H699V142.5H700V145.6H701V145.8H702V146.8H703V146.1H704V146.5H705V146.2H706V147.3H707V147.6H708V147.9H709V147.4H710V148.2H711V148.8H712V148.3H713V143.5H714V137.9H715V136.4H716V127.4H717V127.6H718V123.2H719V128.9H720V128.7H721V126.2H722V133.8H723V133.0H724V133.0H725V135.5H726V139.4H727V139.8H728V142.4H729V143.5H730V141.9H731V143.0H732V143.8H733V144.2H734V145.4H735V146.4H736V147.5H737V148.5H738V149.2H739V148.0H740V146.7H741V143.4H742V143.0H743V140.5H744V138.4H745V135.9H746V139.9H747V136.8H748V140.8H749V140.2H750V141.8H751V143.8H752V146.1H753V147.5H754V148.2H755V148.4H756V148.9H757V149.5H758V148.8H759V136.4H760V126.4H761V123.0H762V125.6H763V131.5H764V127.6H765V129.2H766V132.7H767V129.3H768V130.5H769V131.8H770V132.3H771V133.0H772V134.8H773V133.5H774V135.5H775V138.4H776V135.6H777V138.2H778V135.5H779V136.4H780V139.6H781V137.4H782V138.0H783V139.8H784V141.9H785V142.4H786V140.9H787V141.8H788V143.1H789V143.4H790V143.9H791V143.4H792V141.5H793V142.8H794V142.4H795V143.0H796V143.3H797V142.7H798V142.6H799V143.8H800V142.3H801V143.1H802V142.6H803V142.8H804V143.2H805V144.4H806V145.3H807V145.5H808V147.5H809V147.4H810V148.2H811V146.1H812V143.4H813V139.3H814V135.7H815V129.1H816V131.2H817V123.1H818V127.9H819V121.5H820V124.9H821V127.9H822V129.4H823V129.3H824V132.6H825V133.9H826V138.8H827V142.7H828V145.5H829V146.7H830V147.9H831V147.9H832V147.4H833V147.1H834V147.7H835V146.9H836V147.2H837V147.5H838V148.8H839V148.4H840V148.8H841V149.8H842V146.2H843V139.7H844V133.9H845V128.4H846V129.7H847V124.2H848V109.7H849V112.8H850V107.7H851V119.9H852V120.9H853V118.5H854V124.5H855V125.2H856V131.8H857V131.7H858V134.2H859V139.9H860V139.9H861V141.3H862V142.6H863V138.8H864V138.0H865V131.9H866V132.7H867V126.8H868V118.4H869V116.2H870V115.5H871V123.8H872V121.6H873V115.0H874V118.6H875V122.7H876V126.0H877V118.3H878V126.2H879V120.1H880V128.6H881V129.2H882V130.1H883V125.6H884V128.9H885V131.4H886V127.2H887V126.1H888V129.5H889V123.5H890V118.9H891V117.1H892V115.3H893V113.5H894V118.7H895V117.8H896V122.7H897V121.6H898V117.7H899V121.5H900V118.0H901V120.5H902V125.1H903V119.7H904V116.7H905V123.7H906V119.1H907V125.7H908V120.8H909V118.9H910V121.5H911V127.3H912V124.4H913V121.8H914V123.2H915V122.3H916V131.2H917V130.7H918V127.2H919V132.3H920V133.1H921V138.6H922V141.0H923V143.8H924V145.2H925V146.0H926V145.8H927V147.3H928V147.6H929V147.4H930V139.9H931V132.0H932V121.3H933V122.4H934V122.7H935V123.8H936V126.1H937V125.1H938V127.5H939V135.2H940V132.6H941V131.9H942V132.3H943V132.7H944V135.3H945V136.2H946V135.2H947V133.9H948V135.2H949V139.9H950V142.0H951V141.8H952V145.6H953V146.6H954V147.9H955V148.4H956V148.1H957V148.9H958V149.3H959V149.7H960V147.9H961V144.4H962V143.6H963V138.7H964V136.9H965V139.7H966V136.4H967V138.8H968V138.0H969V134.0H970V134.9H971V136.1H972V134.1H973V135.8H974V136.1H975V140.1H976V138.8H977V139.4H978V140.5H979V141.6H980V138.1H981V126.9H982V120.9H983V116.5H984V102.9H985V113.2H986V103.3H987V109.9H988V99.9H989V101.1H990V110.7H991V106.9H992V108.1H993V113.4H994V107.0H995V112.1H996V125.0H997V133.5H998V139.1H999V144.7H1000V148.7H1001V148.9H1002V148.6H1003V149.1H1004V149.0H1005V149.2H1006V148.6H1007V148.7H1008V147.4H1009V147.2H1010V145.6H1011V144.2H1012V141.6H1013V141.6H1014V139.0H1015V138.8H1016V136.9H1017V128.8H1018V126.7H1019V129.0H1020V127.2H1021V134.1H1022V131.7H1023V137.9H1024V139.8H1025V139.2H1026V144.3H1027V143.4H1028V139.4H1029V140.0H1030V137.6H1031V134.5H1032V133.2H1033V134.5H1034V128.5H1035V132.5H1036V131.3H1037V127.8H1038V131.2H1039V137.5H1040V139.7H1041V141.4H1042V144.2H1043V143.4H1044V142.5H1045V143.5H1046V143.1H1047V143.4H1048V143.5H1049V141.3H1050V141.7H1051V140.6H1052V140.4H1053V138.0H1054V137.1H1055V137.9H1056V134.6H1057V135.4H1058V133.7H1059V132.8H1060V132.0H1061V130.7H1062V136.5H1063V137.2H1064V137.9H1065V137.0H1066V138.2H1067V139.8H1068V141.2H1069V142.4H1070V145.3H1071V145.8H1072V146.9H1073V148.4H1074V148.7H1075V148.2H1076V146.8H1077V145.8H1078V144.0H1079V143.9H1080V143.1H1081V142.0H1082V139.9H1083V141.1H1084V139.0H1085V139.6H1086V141.8H1087V140.3H1088V140.5H1089V142.7H1090V140.7H1091V143.7H1092V142.0H1093V142.5H1094V143.7H1095V145.0H1096V145.2H1097V146.3H1098V145.9H1099V146.5H1100V146.9H1101V147.9H1102V147.7H1103V148.8H1104V148.9H1105V149.0H1106V149.5H1107V149.8H1108V147.7H1109V145.5H1110V143.3H1111V142.5H1112V140.2H1113V140.5H1114V134.9H1115V136.1H1116V134.5H1117V135.6H1118V134.4H1119V138.8H1120V137.5H1121V135.4H1122V137.6H1123V138.9H1124V136.4H1125V138.7H1126V140.5H1127V140.3H1128V141.4H1129V140.8H1130V139.1H1131V139.3H1132V139.6H1133V142.2H1134V142.0H1135V143.1H1136V143.6H1137V143.8H1138V143.8H1139V144.1H1140V145.0H1141V144.0H1142V146.2H1143V147.6H1144V148.8H1145V149.5H1146V150.3H1147V150.3H1148V150.3H1149V150.3H1150V150.3H1151V150.3H1152V150.3H1153V150.3H1154V150.3H1155V150.3H1156V150.3H1157V150.3H1158V150.3H1159V150.3H1160V150.3H1161V150.3H1162V150.3H1163V150.3H1164V150.3H1165V150.3H1166V150.3H1167V145.7H1168V140.6H1169V135.5H1170V136.7H1171V131.6H1172V134.8H1173V131.1H1174V133.9H1175V130.6H1176V130.4H1177V130.1H1178V131.0H1179V134.3H1180V131.9H1181V134.3H1182V131.3H1183V134.2H1184V131.3H1185V131.5H1186V134.6H1187V133.1H1188V137.3H1189V138.5H1190V142.2H1191V143.7H1192V146.6H1193V148.6H1194V150.2H1195V149.6H1196V149.5H1197V149.2H1198V148.8H1199V148.4H1200V148.5H1201V148.3H1202V148.3H1203V148.0H1204V148.0H1205V146.6H1206V147.4H1207V147.0H1208V146.4H1209V146.9H1210V146.9H1211V145.5H1212V144.6H1213V145.9H1214V145.3H1215V145.7H1216V145.4H1217V144.2H1218V145.0H1219V144.2H1220V145.5H1221V145.5H1222V147.3H1223V146.9H1224V147.4H1225V148.4H1226V146.7H1227V145.0H1228V144.2H1229V141.9H1230V142.2H1231V140.0H1232V141.4H1233V139.1H1234V139.4H1235V139.2H1236V139.3H1237V140.5H1238V140.8H1239V144.2H1240V144.6H1241V147.1H1242V146.0H1243V147.4H1244V147.4H1245V148.1H1246V147.3H1247V148.0H1248V148.2H1249V148.4H1250V148.6H1251V149.3H1252V149.8H1253V149.7H1254V149.8H1255V150.1H1256V150.2H1257V150.3H1258V150.3H1259V150.3H1260V150.3H1261V150.3H1262V150.2H1263V150.2H1264V150.2H1265V150.3H1266V150.3H1267V150.3H1268V150.2H1269V150.2H1270V150.3H1271V150.2H1272V150.3H1273V150.2H1274V150.3H1275V150.2H1276V150.3H1277V150.2H1278V150.2H1279V150.2H1280V150.2H1281V150.3H1282V150.3H1283V150.3H1284V150.3H1285V150.3H1286V150.2H1287V150.3H1288V150.3H1289V150.3H1290V150.2H1291V150.2H1292V150.3H1293V150.3H1294V150.3H1295V150.3H1296V150.2H1297V150.3H1298V150.2H1299V150.2H1300V150.3H1301V150.3H1302V150.3H1303V150.2H1304V150.3H1305V150.2H1306V150.3H1307V150.2H1308V150.3H1309V150.3H1310V150.3H1311V150.3H1312V150.1H1313V149.5H1314V148.9H1315V148.3H1316V148.3H1317V147.2H1318V146.0H1319V134.2H1320V124.3H1321V108.6H1322V112.6H1323V116.9H1324V112.4H1325V106.1H1326V116.4H1327V109.3H1328V115.6H1329V120.7H1330V128.6H1331V131.3H1332V131.5H1333V136.3H1334V135.7H1335V131.2H1336V131.4H1337V123.5H1338V124.5H1339V121.4H1340V123.2H1341V121.0H1342V125.1H1343V122.0H1344V116.4H1345V121.3H1346V119.4H1347V118.8H1348V123.4H1349V127.4H1350V127.7H1351V131.1H1352V127.5H1353V108.5H1354V95.5H1355V98.3H1356V96.8H1357V88.2H1358V98.0H1359V96.0H1360V86.8H1361V102.8H1362V87.7H1363V85.8H1364V89.5H1365V103.9H1366V111.1H1367V118.5H1368V130.6H1369V128.8H1370V132.1H1371V129.4H1372V131.9H1373V128.9H1374V126.8H1375V135.3H1376V135.6H1377V135.0H1378V137.9H1379V140.6H1380V144.1H1381V144.1H1382V144.1H1383V143.9H1384V142.0H1385V141.1H1386V135.1H1387V136.4H1388V131.5H1389V129.5H1390V133.7H1391V134.1H1392V131.8H1393V135.1H1394V136.5H1395V138.8H1396V142.7H1397V141.1H1398V135.1H1399V135.8H1400V129.2H1401V129.3H1402V125.6H1403V124.5H1404V125.9H1405V125.2H1406V130.1H1407V129.1H1408V127.8H1409V129.0H1410V133.1H1411V133.0H1412V132.9H1413V135.1H1414V134.6H1415V134.9H1416V135.5H1417V138.7H1418V133.6H1419V137.8H1420V133.1H1421V132.7H1422V125.5H1423V121.5H1424V113.8H1425V115.8H1426V116.7H1427V106.4H1428V102.0H1429V107.5H1430V106.7H1431V103.3H1432V113.6H1433V123.7H1434V119.7H1435V126.2H1436V131.2H1437V132.9H1438V134.8H1439V128.7H1440V132.4H1441V132.0H1442V125.7H1443V130.6H1444V125.6H1445V129.4H1446V130.4H1447V130.4H1448V132.4H1449V133.3H1450V134.6H1451V132.6H1452V137.8H1453V138.2H1454V139.5H1455V144.4H1456V145.5H1457V146.4H1458V142.7H1459V139.3H1460V134.5H1461V134.5H1462V135.6H1463V129.7H1464V133.8H1465V135.2H1466V137.1H1467V139.3H1468V142.3H1469V141.9H1470V143.3H1471V143.4H1472V142.4H1473V141.0H1474V141.5H1475V142.2H1476V139.5H1477V139.2H1478V138.3H1479V141.3H1480V140.9H1481V139.0H1482V135.9H1483V137.3H1484V134.7H1485V135.7H1486V133.6H1487V135.4H1488V136.2H1489V136.1H1490V139.8H1491V138.2H1492V139.5H1493V143.6H1494V143.1H1495V146.3H1496V147.7H1497V146.9H1498V147.1H1499V145.5H1500V145.5H1501V145.5H1502V143.8H1503V141.4H1504V142.7H1505V141.5H1506V141.9H1507V138.3H1508V141.0H1509V137.6H1510V137.5H1511V141.1H1512V139.5H1513V141.2H1514V140.2H1515V140.5H1516V143.9H1517V143.8H1518V144.5H1519V143.4H1520V144.4H1521V146.4H1522V146.5H1523V146.8H1524V147.9H1525V149.1H1526V150.0H1527V150.1H1528V150.1H1529V149.8H1530V149.9H1531V149.7H1532V150.0H1533V149.6H1534V149.4H1535V149.8H1536V149.8H1537V149.5H1538V149.5H1539V149.6H1540V149.6H1541V149.5H1542V149.4H1543V149.1H1544V148.7H1545V149.3H1546V149.0H1547V148.5H1548V148.4H1549V148.6H1550V148.2H1551V148.2H1552V148.8H1553V148.1H1554V148.4H1555V148.5H1556V148.1H1557V148.5H1558V148.0H1559V147.9H1560V148.0H1561V148.6H1562V149.5H1563V150.2H1564V150.3H1565V150.3H1566V150.3H1567V150.3H1568V150.2H1569V150.2H1570V150.3H1571V150.3H1572V150.3H1573V150.2H1574V150.3H1575V150.2H1576V150.3H1577V150.2H1578V150.2H1579V150.3H1580V150.2H1581V150.3H1582V150.3H1583V150.3H1584V150.2H1585V150.2H1586V150.3H1587V150.2H1588V150.3H1589V150.3H1590V150.3H1591V150.2H1592V150.3H1593V150.3H1594V150.3H1595V150.2H1596V150.3H1597V150.3H1598V150.3H1599V150.2H1600V150.3H1601V150.3H1602V150.2H1603V150.3H1604V150.3H1605V150.2H1606V150.2H1607V150.3H1608V150.3H1609V150.3H1610V150.3H1611V150.3H1612V150.2H1613V150.3H1614V150.3H1615V152.3H1614V152.3H1613V152.3H1612V152.3H1611V152.3H1610V152.3H1609V152.3H1608V152.3H1607V152.3H1606V152.3H1605V152.3H1604V152.3H1603V152.3H1602V152.3H1601V152.3H1600V152.3H1599V152.3H1598V152.3H1597V152.3H1596V152.3H1595V152.3H1594V152.3H1593V152.3H1592V152.3H1591V152.3H1590V152.3H1589V152.3H1588V152.3H1587V152.3H1586V152.3H1585V152.3H1584V152.3H1583V152.3H1582V152.3H1581V152.3H1580V152.3H1579V152.3H1578V152.3H1577V152.3H1576V152.3H1575V152.3H1574V152.3H1573V152.3H1572V152.3H1571V152.3H1570V152.3H1569V152.3H1568V152.3H1567V152.3H1566V152.3H1565V152.3H1564V152.3H1563V152.3H1562V152.3H1561V152.3H1560V152.3H1559V152.3H1558V152.3H1557V152.3H1556V152.3H1555V152.3H1554V152.3H1553V152.3H1552V152.3H1551V152.3H1550V152.3H1549V152.3H1548V152.3H1547V152.3H1546V152.3H1545V152.3H1544V152.3H1543V152.3H1542V152.3H1541V152.3H1540V152.3H1539V152.3H1538V152.3H1537V152.3H1536V152.3H1535V152.3H1534V152.3H1533V152.3H1532V152.3H1531V152.3H1530V152.3H1529V152.3H1528V152.3H1527V152.3H1526V152.3H1525V152.3H1524V152.6H1523V152.7H1522V153.6H1521V153.4H1520V154.0H1519V154.1H1518V153.4H1517V153.7H1516V153.6H1515V154.1H1514V153.7H1513V154.7H1512V154.6H1511V154.2H1510V154.8H1509V154.5H1508V154.1H1507V154.6H1506V154.1H1505V153.8H1504V153.7H1503V153.4H1502V153.3H1501V153.3H1500V153.1H1499V152.9H1498V152.4H1497V152.4H1496V153.0H1495V153.5H1494V153.7H1493V154.5H1492V154.1H1491V155.2H1490V155.3H1489V155.7H1488V155.5H1487V154.9H1486V154.8H1485V155.8H1484V155.2H1483V156.0H1482V155.7H1481V155.6H1480V155.3H1479V154.8H1478V155.9H1477V155.7H1476V155.4H1475V155.2H1474V156.0H1473V155.5H1472V155.6H1471V155.0H1470V156.3H1469V155.4H1468V155.9H1467V155.7H1466V155.9H1465V156.7H1464V156.4H1463V157.9H1462V155.9H1461V156.8H1460V155.1H1459V155.1H1458V155.0H1457V155.6H1456V158.4H1455V159.1H1454V160.2H1453V162.1H1452V164.1H1451V164.5H1450V163.1H1449V166.1H1448V163.6H1447V166.4H1446V167.9H1445V164.6H1444V165.8H1443V166.3H1442V162.7H1441V163.8H1440V163.3H1439V160.7H1438V162.1H1437V161.8H1436V166.8H1435V169.3H1434V176.6H1433V178.7H1432V183.9H1431V182.6H1430V184.7H1429V185.0H1428V179.8H1427V181.7H1426V172.0H1425V170.9H1424V169.4H1423V165.5H1422V161.9H1421V161.9H1420V159.8H1419V160.7H1418V161.6H1417V161.2H1416V159.8H1415V159.2H1414V161.6H1413V162.2H1412V160.1H1411V160.4H1410V161.5H1409V162.3H1408V161.2H1407V161.4H1406V164.0H1405V161.3H1404V160.9H1403V161.8H1402V159.7H1401V160.8H1400V158.8H1399V159.4H1398V157.7H1397V156.1H1396V156.0H1395V156.5H1394V156.8H1393V158.3H1392V160.0H1391V157.7H1390V160.0H1389V159.7H1388V158.6H1387V158.2H1386V157.4H1385V156.4H1384V155.6H1383V155.4H1382V156.2H1381V156.8H1380V156.8H1379V158.3H1378V160.1H1377V159.2H1376V162.4H1375V162.8H1374V161.9H1373V162.8H1372V163.6H1371V160.5H1370V162.3H1369V161.6H1368V163.3H1367V168.2H1366V169.2H1365V179.3H1364V180.1H1363V192.1H1362V215.3H1361V228.9H1360V232.3H1359V212.9H1358V212.8H1357V196.8H1356V196.0H1355V177.5H1354V170.7H1353V165.4H1352V163.9H1351V164.2H1350V163.8H1349V167.0H1348V170.6H1347V165.9H1346V165.4H1345V169.9H1344V167.5H1343V166.9H1342V166.7H1341V163.4H1340V164.3H1339V162.0H1338V165.2H1337V162.2H1336V163.4H1335V163.2H1334V164.0H1333V165.4H1332V165.0H1331V167.9H1330V166.3H1329V168.0H1328V167.7H1327V168.6H1326V169.2H1325V171.7H1324V165.5H1323V165.0H1322V164.2H1321V160.2H1320V155.6H1319V153.0H1318V152.4H1317V152.6H1316V152.3H1315V152.3H1314V152.3H1313V152.3H1312V152.3H1311V152.3H1310V152.3H1309V152.3H1308V152.3H1307V152.3H1306V152.3H1305V152.3H1304V152.3H1303V152.3H1302V152.3H1301V152.3H1300V152.3H1299V152.3H1298V152.3H1297V152.3H1296V152.3H1295V152.3H1294V152.3H1293V152.3H1292V152.3H1291V152.3H1290V152.3H1289V152.3H1288V152.3H1287V152.3H1286V152.3H1285V152.3H1284V152.3H1283V152.3H1282V152.3H1281V152.3H1280V152.3H1279V152.3H1278V152.3H1277V152.3H1276V152.3H1275V152.3H1274V152.3H1273V152.3H1272V152.3H1271V152.3H1270V152.3H1269V152.3H1268V152.3H1267V152.3H1266V152.3H1265V152.3H1264V152.3H1263V152.3H1262V152.3H1261V152.3H1260V152.3H1259V152.3H1258V152.3H1257V152.3H1256V152.3H1255V152.3H1254V152.3H1253V152.3H1252V152.3H1251V152.3H1250V152.3H1249V152.3H1248V152.3H1247V152.3H1246V152.4H1245V152.3H1244V152.5H1243V152.6H1242V152.6H1241V153.6H1240V153.8H1239V154.6H1238V156.4H1237V156.6H1236V156.6H1235V155.9H1234V155.7H1233V154.1H1232V154.1H1231V153.2H1230V153.5H1229V153.0H1228V152.8H1227V152.5H1226V152.5H1225V152.6H1224V152.9H1223V153.1H1222V153.3H1221V153.3H1220V153.5H1219V153.9H1218V153.5H1217V153.7H1216V153.8H1215V153.8H1214V153.1H1213V153.2H1212V153.1H1211V153.2H1210V153.0H1209V153.0H1208V153.2H1207V153.2H1206V152.9H1205V153.0H1204V152.6H1203V152.6H1202V152.6H1201V152.5H1200V152.8H1199V152.5H1198V152.6H1197V152.4H1196V152.3H1195V152.3H1194V152.7H1193V153.5H1192V154.1H1191V154.9H1190V155.5H1189V155.5H1188V156.8H1187V156.2H1186V158.1H1185V157.4H1184V156.7H1183V158.1H1182V158.1H1181V159.0H1180V158.6H1179V158.2H1178V159.0H1177V157.4H1176V157.8H1175V158.7H1174V158.7H1173V156.6H1172V157.8H1171V156.7H1170V156.8H1169V155.3H1168V153.2H1167V152.3H1166V152.3H1165V152.3H1164V152.3H1163V152.3H1162V152.3H1161V152.3H1160V152.3H1159V152.3H1158V152.3H1157V152.3H1156V152.3H1155V152.3H1154V152.3H1153V152.3H1152V152.3H1151V152.3H1150V152.3H1149V152.3H1148V152.3H1147V152.3H1146V152.7H1145V153.5H1144V153.9H1143V154.4H1142V155.5H1141V155.3H1140V154.9H1139V155.7H1138V155.6H1137V155.8H1136V156.1H1135V156.7H1134V157.0H1133V156.8H1132V155.9H1131V157.0H1130V156.7H1129V157.7H1128V156.7H1127V156.9H1126V157.6H1125V157.9H1124V156.6H1123V157.9H1122V157.9H1121V159.1H1120V159.2H1119V158.6H1118V157.6H1117V158.0H1116V158.7H1115V157.8H1114V156.8H1113V156.8H1112V155.4H1111V155.0H1110V154.5H1109V153.5H1108V152.4H1107V152.8H1106V152.9H1105V153.1H1104V153.4H1103V153.2H1102V153.8H1101V153.6H1100V154.3H1099V154.0H1098V154.4H1097V154.6H1096V154.7H1095V155.7H1094V155.2H1093V155.6H1092V155.6H1091V156.8H1090V156.9H1089V157.0H1088V157.3H1087V156.6H1086V156.3H1085V157.5H1084V157.5H1083V156.1H1082V156.8H1081V155.0H1080V155.6H1079V155.0H1078V153.6H1077V153.3H1076V153.2H1075V152.9H1074V153.7H1073V154.8H1072V155.6H1071V156.2H1070V155.5H1069V157.4H1068V157.0H1067V157.2H1066V158.9H1065V159.1H1064V159.6H1063V159.3H1062V158.7H1061V158.6H1060V160.2H1059V158.9H1058V158.4H1057V160.0H1056V157.3H1055V158.5H1054V157.3H1053V156.2H1052V156.4H1051V156.4H1050V156.5H1049V155.9H1048V156.4H1047V156.8H1046V156.8H1045V156.7H1044V157.4H1043V156.5H1042V157.9H1041V158.5H1040V158.8H1039V158.2H1038V159.5H1037V159.5H1036V158.6H1035V157.8H1034V158.9H1033V158.7H1032V158.3H1031V157.3H1030V155.9H1029V155.7H1028V155.8H1027V156.4H1026V156.5H1025V157.6H1024V158.8H1023V159.1H1022V159.8H1021V160.8H1020V160.9H1019V160.1H1018V160.8H1017V158.6H1016V157.4H1015V158.2H1014V156.0H1013V155.7H1012V154.2H1011V153.7H1010V153.1H1009V153.1H1008V152.3H1007V152.6H1006V152.6H1005V152.9H1004V153.4H1003V153.5H1002V153.7H1001V153.6H1000V154.9H999V158.2H998V162.0H997V166.9H996V168.1H995V172.0H994V168.8H993V170.6H992V174.5H991V168.9H990V169.6H989V174.5H988V174.5H987V173.7H986V169.7H985V168.0H984V169.5H983V166.4H982V162.4H981V160.1H980V158.4H979V159.7H978V158.3H977V158.4H976V157.6H975V158.2H974V158.8H973V158.1H972V158.2H971V157.7H970V157.8H969V158.1H968V158.8H967V157.5H966V157.9H965V157.7H964V156.7H963V155.7H962V154.0H961V153.3H960V153.1H959V153.5H958V154.0H957V154.6H956V154.5H955V155.1H954V156.2H953V156.8H952V157.9H951V158.6H950V160.0H949V159.0H948V160.5H947V163.2H946V163.2H945V162.8H944V159.9H943V162.0H942V160.3H941V160.7H940V159.7H939V162.1H938V162.6H937V162.9H936V160.1H935V163.3H934V160.6H933V160.9H932V157.0H931V155.6H930V155.1H929V155.6H928V155.9H927V156.6H926V156.4H925V157.4H924V158.6H923V160.4H922V161.7H921V160.9H920V163.5H919V166.7H918V168.1H917V169.1H916V167.0H915V167.0H914V167.1H913V167.9H912V166.8H911V172.0H910V170.9H909V172.7H908V169.6H907V168.7H906V170.9H905V172.7H904V171.3H903V169.4H902V170.6H901V167.5H900V172.7H899V171.5H898V172.7H897V166.7H896V172.7H895V167.2H894V169.7H893V167.6H892V170.0H891V168.2H890V167.0H889V170.7H888V168.2H887V171.3H886V170.0H885V168.7H884V170.8H883V168.0H882V170.3H881V170.4H880V168.0H879V167.1H878V172.8H877V168.7H876V169.2H875V169.6H874V171.2H873V174.4H872V170.5H871V169.9H870V170.4H869V171.9H868V170.5H867V165.2H866V163.9H865V160.0H864V159.4H863V157.2H862V160.5H861V163.1H860V164.9H859V163.1H858V169.1H857V167.1H856V167.7H855V171.4H854V177.0H853V176.0H852V182.2H851V179.2H850V179.8H849V173.5H848V170.1H847V167.1H846V167.5H845V161.6H844V158.8H843V155.4H842V152.8H841V153.1H840V153.2H839V153.2H838V153.4H837V153.4H836V153.7H835V153.6H834V153.7H833V154.1H832V153.4H831V153.9H830V153.6H829V154.6H828V157.6H827V158.3H826V161.7H825V163.9H824V162.8H823V162.5H822V165.9H821V163.7H820V166.5H819V166.9H818V166.9H817V163.3H816V161.7H815V159.2H814V157.6H813V155.9H812V154.1H811V152.9H810V153.1H809V153.5H808V154.3H807V155.1H806V155.2H805V155.0H804V155.2H803V155.1H802V155.5H801V155.6H800V155.1H799V155.3H798V155.7H797V155.7H796V155.1H795V155.1H794V156.7H793V157.0H792V157.0H791V156.0H790V157.0H789V156.6H788V158.7H787V159.1H786V158.2H785V158.9H784V161.1H783V161.1H782V159.7H781V160.6H780V161.2H779V163.2H778V161.4H777V163.7H776V162.8H775V161.7H774V161.6H773V161.2H772V163.8H771V162.2H770V163.2H769V164.1H768V162.8H767V163.9H766V164.7H765V164.5H764V160.8H763V161.9H762V161.1H761V160.4H760V157.8H759V152.7H758V152.5H757V152.6H756V152.7H755V152.8H754V153.0H753V152.9H752V153.7H751V154.5H750V154.0H749V154.3H748V156.0H747V155.2H746V154.8H745V155.5H744V154.1H743V154.2H742V153.7H741V153.5H740V152.8H739V153.0H738V153.5H737V153.9H736V155.3H735V155.5H734V155.8H733V155.9H732V155.9H731V156.7H730V156.9H729V158.0H728V159.0H727V158.9H726V159.3H725V158.3H724V159.5H723V159.5H722V161.9H721V162.8H720V162.6H719V163.1H718V162.7H717V159.6H716V157.8H715V156.0H714V155.1H713V152.7H712V153.2H711V152.9H710V153.1H709V153.8H708V154.4H707V155.1H706V154.8H705V155.3H704V156.7H703V155.8H702V157.3H701V158.2H700V157.1H699V157.0H698V159.4H697V158.1H696V159.6H695V160.5H694V160.6H693V163.2H692V161.9H691V164.1H690V163.8H689V164.2H688V165.7H687V166.7H686V165.9H685V165.9H684V165.3H683V161.3H682V161.9H681V160.4H680V157.7H679V157.8H678V156.6H677V156.8H676V158.9H675V158.9H674V159.6H673V161.5H672V168.6H671V170.9H670V173.4H669V182.5H668V182.5H667V179.8H666V184.0H665V192.7H664V191.0H663V190.6H662V186.7H661V186.5H660V177.7H659V171.7H658V166.1H657V162.3H656V163.7H655V161.1H654V161.6H653V162.2H652V160.1H651V160.7H650V158.6H649V159.1H648V157.9H647V157.6H646V155.8H645V156.0H644V155.0H643V154.1H642V153.3H641V152.7H640V152.9H639V153.4H638V153.6H637V155.0H636V154.8H635V155.9H634V155.2H633V155.8H632V155.0H631V155.3H630V155.9H629V155.4H628V156.3H627V156.3H626V157.9H625V157.0H624V159.6H623V161.0H622V162.8H621V165.6H620V173.4H619V172.9H618V176.4H617V178.3H616V170.8H615V168.9H614V161.4H613V157.1H612V158.9H611V160.5H610V161.0H609V161.1H608V161.2H607V167.4H606V167.5H605V173.3H604V173.4H603V173.4H602V171.0H601V169.5H600V167.2H599V158.6H598V152.6H597V152.3H596V152.3H595V152.3H594V152.3H593V152.3H592V152.3H591V152.3H590V152.3H589V152.3H588V152.3H587V152.3H586V152.3H585V152.3H584V152.3H583V152.3H582V152.3H581V152.3H580V152.3H579V152.3H578V152.3H577V152.3H576V152.3H575V152.3H574V152.3H573V152.3H572V152.3H571V152.3H570V152.3H569V152.3H568V152.3H567V152.3H566V152.3H565V152.3H564V152.3H563V152.3H562V152.3H561V152.3H560V152.3H559V152.3H558V152.3H557V152.3H556V152.3H555V152.3H554V152.3H553V152.3H552V152.3H551V152.3H550V152.3H549V152.9H548V153.8H547V154.0H546V154.3H545V155.1H544V154.6H543V155.0H542V154.3H541V154.7H540V154.6H539V153.9H538V153.2H537V152.3H536V152.3H535V152.3H534V152.3H533V152.3H532V152.3H531V152.3H530V152.3H529V152.3H528V152.3H527V152.3H526V152.3H525V152.3H524V152.3H523V152.3H522V152.3H521V152.3H520V152.3H519V152.3H518V152.3H517V152.3H516V152.3H515V152.3H514V152.3H513V152.3H512V152.3H511V152.3H510V152.3H509V152.3H508V152.3H507V152.3H506V152.3H505V152.3H504V152.3H503V152.3H502V152.3H501V152.3H500V152.3H499V152.3H498V152.3H497V152.3H496V152.3H495V152.3H494V152.3H493V152.3H492V152.3H491V152.3H490V152.3H489V152.3H488V152.3H487V152.3H486V152.3H485V152.3H484V152.3H483V152.3H482V152.3H481V152.3H480V152.3H479V152.3H478V152.3H477V152.3H476V152.3H475V152.3H474V152.3H473V152.3H472V152.3H471V152.3H470V152.3H469V152.3H468V152.3H467V152.3H466V152.3H465V152.3H464V152.3H463V152.3H462V152.3H461V152.3H460V152.3H459V152.3H458V152.3H457V152.3H456V152.3H455V152.3H454V152.3H453V152.3H452V152.3H451V152.3H450V152.3H449V152.3H448V152.3H447V152.3H446V152.3H445V152.3H444V152.3H443V152.3H442V152.3H441V152.3H440V152.3H439V152.3H438V152.3H437V152.3H436V152.3H435V152.3H434V152.3H433V152.3H432V152.3H431V152.3H430V152.3H429V152.3H428V152.3H427V152.3H426V152.3H425V152.3H424V152.3H423V152.3H422V152.3H421V152.3H420V152.3H419V152.3H418V152.3H417V152.3H416V152.3H415V152.3H414V152.3H413V152.3H412V152.8H411V153.2H410V154.0H409V154.9H408V155.3H407V156.0H406V156.1H405V156.2H404V155.2H403V155.9H402V156.5H401V155.8H400V155.3H399V155.7H398V155.6H397V156.3H396V155.8H395V155.7H394V156.1H393V156.9H392V156.6H391V156.6H390V156.6H389V156.9H388V156.7H387V157.1H386V157.9H385V157.2H384V157.6H383V157.7H382V157.1H381V157.0H380V156.7H379V157.7H378V157.7H377V157.6H376V156.1H375V156.0H374V157.0H373V157.9H372V157.2H371V157.0H370V157.7H369V156.6H368V157.4H367V157.9H366V156.7H365V157.5H364V156.5H363V156.8H362V157.9H361V157.2H360V157.7H359V157.8H358V157.2H357V156.3H356V157.9H355V156.7H354V155.4H353V154.9H352V153.9H351V153.0H350V152.3H349V152.5H348V152.4H347V152.7H346V152.9H345V153.0H344V152.8H343V152.9H342V153.6H341V154.0H340V154.8H339V154.3H338V155.7H337V155.5H336V156.4H335V156.5H334V158.3H333V160.1H332V160.7H331V161.2H330V162.5H329V165.5H328V165.3H327V167.3H326V166.6H325V172.9H324V174.3H323V173.2H322V174.3H321V179.5H320V181.2H319V182.4H318V182.9H317V175.7H316V179.7H315V176.8H314V171.3H313V169.0H312V162.2H311V152.7H310V152.3H309V152.3H308V152.3H307V152.3H306V152.3H305V152.3H304V152.3H303V152.3H302V152.3H301V152.3H300V152.3H299V152.3H298V152.3H297V152.3H296V152.3H295V152.3H294V152.3H293V152.3H292V152.3H291V152.3H290V152.3H289V152.3H288V152.3H287V152.3H286V152.3H285V152.3H284V152.3H283V152.3H282V152.3H281V152.3H280V152.3H279V152.3H278V152.3H277V152.3H276V152.3H275V152.3H274V152.3H273V152.3H272V152.3H271V152.3H270V152.3H269V152.3H268V152.3H267V152.3H266V152.3H265V152.3H264V152.3H263V152.3H262V152.3H261V152.3H260V152.3H259V152.3H258V152.3H257V152.3H256V152.3H255V152.3H254V152.3H253V152.3H252V152.3H251V152.3H250V152.3H249V152.3H248V152.3H247V152.3H246V152.3H245V152.3H244V152.3H243V152.3H242V152.3H241V152.3H240V152.3H239V152.3H238V152.3H237V152.3H236V152.3H235V152.4H234V152.4H233V152.6H232V152.5H231V152.7H230V152.8H229V152.9H228V153.0H227V153.1H226V152.7H225V152.8H224V153.2H223V152.9H222V153.2H221V153.5H220V153.6H219V153.8H218V153.7H217V153.8H216V153.5H215V153.9H214V154.1H213V153.8H212V153.3H211V153.4H210V153.6H209V153.4H208V153.7H207V153.4H206V153.0H205V153.0H204V153.3H203V153.0H202V153.2H201V152.9H200V153.0H199V153.2H198V152.8H197V153.0H196V152.8H195V153.0H194V152.7H193V152.9H192V152.8H191V152.7H190V152.5H189V152.4H188V152.8H187V153.0H186V153.5H185V153.7H184V153.8H183V155.2H182V155.2H181V156.0H180V156.7H179V155.5H178V156.6H177V155.3H176V155.1H175V154.8H174V154.1H173V154.3H172V153.8H171V153.7H170V152.8H169V152.7H168V152.6H167V152.7H166V153.4H165V153.1H164V154.0H163V154.2H162V154.5H161V154.4H160V154.3H159V154.8H158V155.0H157V154.8H156V154.6H155V154.7H154V155.6H153V154.9H152V155.1H151V155.7H150V155.7H149V155.4H148V156.1H147V156.4H146V157.5H145V156.2H144V156.9H143V157.2H142V157.0H141V157.6H140V156.2H139V156.9H138V155.8H137V157.3H136V155.8H135V156.2H134V155.6H133V156.0H132V156.3H131V155.6H130V155.5H129V155.6H128V155.2H127V156.4H126V155.3H125V155.2H124V155.1H123V154.7H122V154.9H121V155.4H120V155.7H119V155.5H118V155.9H117V155.4H116V156.0H115V155.3H114V155.2H113V155.1H112V156.0H111V155.1H110V155.6H109V154.8H108V155.1H107V159.2H106V164.4H105V162.7H104V162.4H103V163.2H102V162.2H101V161.8H100V160.0H99V159.3H98V162.2H97V160.3H96V160.9H95V159.6H94V161.6H93V162.7H92V161.4H91V161.6H90V162.6H89V163.1H88V161.7H87V161.7H86V160.5H85V162.6H84V160.7H83V161.1H82V164.7H81V165.2H80V162.9H79V163.8H78V163.2H77V161.0H76V163.5H75V162.2H74V162.9H73V159.6H72V160.6H71V161.6H70V160.0H69V161.2H68V160.2H67V161.6H66V160.1H65V159.8H64V162.7H63V163.6H62V165.5H61V169.3H60V170.5H59V171.8H58V177.6H57V179.8H56V185.4H55V191.2H54V194.0H53V203.2H52V211.5H51V221.0H50V219.2H49V237.8H48V237.5H47V240.2H46V222.3H45V235.5H44V207.2H43V192.5H42V170.2H41V159.9H40V161.6H39V161.3H38V161.6H37V161.8H36V158.6H35V155.2H34V152.3H33V152.3H32V152.3H31V152.3H30V152.3H29V152.3H28V152.3H27V152.3H26V152.3H25V152.3H24V152.3H23V152.3H22V152.3H21V152.3H20V152.3H19V152.3H18V152.3H17V152.3H16V152.3H15V152.6H14V152.9H13V153.6H12V153.9H11V154.5H10V155.9H9V156.2H8V156.9H7V156.5H6V156.3H5V156.3H4V157.6H3V156.5H2V156.0H1V156.9H0Z"/></svg>
</div>
<div class="a" style="left:6px;top:410px;width:2000px;height:263px;border:2px solid #74a6e8;border-radius:7px;box-shadow:0 0 0 1px #0b2b55, inset 0 0 0 1px #0b2b55"></div>
<div class="a" style="left:1360.5px;top:134px;width:2px;height:276px;background:#1c2566"></div>
<div class="a" style="left:1361px;top:87px;width:1px;height:44px;background:#f4f5f7"></div>
<svg class="a" style="left:1278px;top:364px" width="24" height="40"><path d="M5.2 3 V37.5" stroke="#000" stroke-width="2.8"/><path d="M5.2 3 V37.5" stroke="#fff" stroke-width="2" stroke-dasharray="2 2.4"/><path d="M6 19 L15.7 10.6 M6 19 L10.5 23" stroke="#c8cbcf" stroke-width="3.2" fill="none" stroke-linecap="round"/><path d="M6 19 L15.7 10.6 M6 19 L10.5 23" stroke="#000" stroke-width="1.5" fill="none" stroke-linecap="round"/><circle cx="11.8" cy="26.5" r="3.3" fill="none" stroke="#c8cbcf" stroke-width="3.2"/><circle cx="11.8" cy="26.5" r="2.9" fill="#000" stroke="#000" stroke-width="1.6"/><circle cx="11.8" cy="26.5" r="1" fill="#d8dbde"/></svg>


</body></html>
